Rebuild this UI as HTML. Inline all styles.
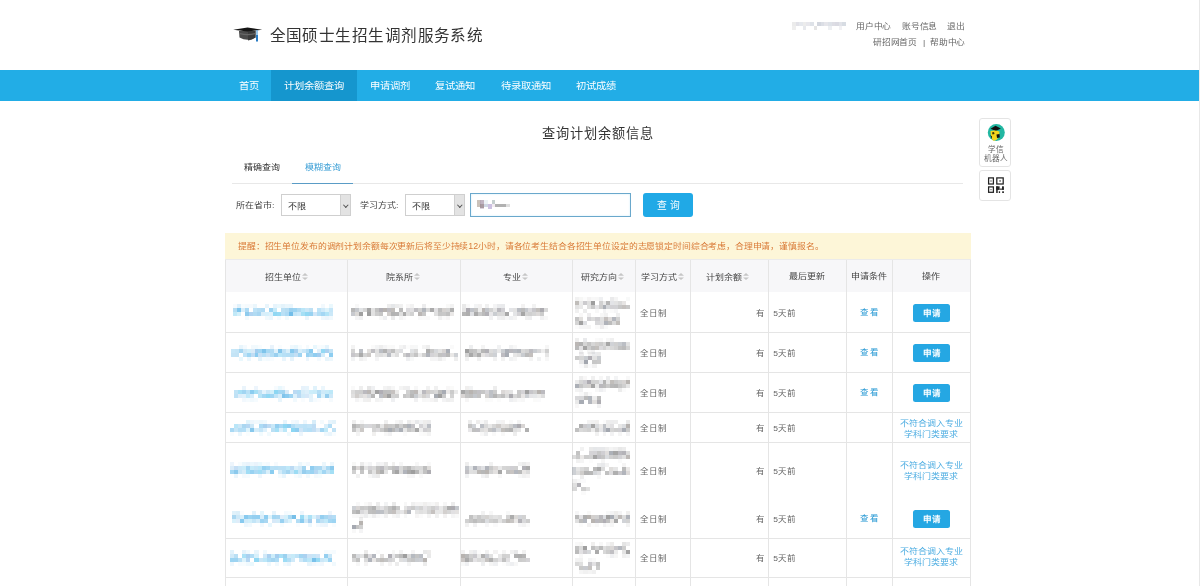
<!DOCTYPE html>
<html lang="zh-CN">
<head>
<meta charset="utf-8">
<style>
*{margin:0;padding:0;box-sizing:border-box}
html,body{width:1200px;height:586px;overflow:hidden;background:#fff}
body{position:relative;font-family:"Liberation Sans",sans-serif;color:#333}
.abs{position:absolute;white-space:nowrap}
#sb{position:absolute;left:1199px;top:0;width:1px;height:586px;background:#e8e8e8}
#nav{position:absolute;left:0;top:70px;width:1199px;height:31px;background:#22ade6}
#nav .on{position:absolute;left:270.5px;top:0;width:86.3px;height:31px;background:#1596ce}
#nav .t{position:absolute;top:11.6px;font-size:10.3px;line-height:10.3px;color:#fff;white-space:nowrap;transform:scaleY(0.9);transform-origin:0 0}
.toplnk{font-size:9px;line-height:9px;color:#666;transform:scale(0.975,0.86);transform-origin:0 0}
.f9{font-size:9px;line-height:9px;transform:scaleY(0.86);transform-origin:0 0}
.sel{position:absolute;height:22px;border:1px solid #cfcfcf;background:#fff}
.sel .arr{position:absolute;right:0;top:0;width:10.5px;height:20px;background:#e3e3e3;border-left:1px solid #d0d0d0}
.sel .arr:after{content:"";position:absolute;left:3.2px;top:7.6px;width:2.6px;height:2.6px;border-right:1px solid #555;border-bottom:1px solid #555;transform:rotate(45deg)}
.sel .txt{position:absolute;left:6px;top:7.5px;font-size:9px;line-height:9px;color:#333;transform:scaleY(0.86);transform-origin:0 0}
.hl{position:absolute;height:1px;background:#e5e5e5}
.vl{position:absolute;width:1px;background:#e5e5e5}
.th{position:absolute;top:273px;font-size:9px;line-height:9px;color:#444;white-space:nowrap;transform:scaleY(0.88);transform-origin:0 0}
.si{display:inline-block;width:7px;height:8px;vertical-align:-0.5px;margin-left:1.2px;position:relative}
.si:before,.si:after{content:"";position:absolute;left:0;border-left:3.5px solid transparent;border-right:3.5px solid transparent}
.si:before{top:-0.5px;border-bottom:3.2px solid #c6c6c6}
.si:after{top:4.5px;border-top:3px solid #c6c6c6}
.td{position:absolute;font-size:8.5px;line-height:8.5px;letter-spacing:0;color:#666;white-space:nowrap;transform:scaleY(0.9);transform-origin:0 0}
.link{color:#2799d4;font-weight:500;letter-spacing:0.2px}
.btn{position:absolute;width:37px;height:17.5px;line-height:18.6px;border-radius:2.5px;background:#25a7e3;color:#fff;text-align:center;font-size:9px;font-weight:bold}
.bt{display:inline-block;transform:scale(0.95,0.86);transform-origin:50% 50%}
.cond{position:absolute;color:#4dade2;font-size:9px;line-height:11.6px;text-align:center;width:78px;white-space:nowrap;transform:scaleY(0.88);transform-origin:0 0}
</style>
</head>
<body>
<div id="wrap" style="position:absolute;left:0;top:0;width:1200px;height:586px;will-change:transform">
<div id="sb"></div>

<!-- header -->
<svg class="abs" style="left:230px;top:25px" width="35" height="20" viewBox="230 25 35 20">
  <path d="M239,31 L255.5,31 L255.5,37.6 Q247.5,42 239.5,37.6 Z" fill="#4a4a4a"/>
  <path d="M248,31.5 L255.5,31 L255.5,37.6 Q252,40 248,40.5 Z" fill="#3a3a3a"/>
  <path d="M240,33 Q247.5,35 255,33 L255,34.2 Q247.5,36.5 240,34.2 Z" fill="#666"/>
  <polygon points="233.2,29.7 247.5,27.4 262.2,29.7 247.5,31.6" fill="#151515"/>
  <rect x="256" y="30.5" width="2" height="11" fill="#2a7cc4"/>
  <rect x="256" y="30.5" width="2" height="4.5" fill="#9cc8ea"/>
</svg>
<div class="abs" style="left:269.5px;top:28.2px;font-size:15.6px;line-height:15.6px;letter-spacing:0.45px;color:#333">全国硕士生招生调剂服务系统</div>

<div class="abs toplnk" style="left:856px;top:22.8px">用户中心</div>
<div class="abs toplnk" style="left:901.5px;top:22.8px">账号信息</div>
<div class="abs toplnk" style="left:946.5px;top:22.8px">退出</div>
<div class="abs toplnk" style="left:873px;top:39.3px">研招网首页</div>
<div class="abs toplnk" style="left:923px;top:39.3px">|</div>
<div class="abs toplnk" style="left:930px;top:39.3px">帮助中心</div>

<div id="nav">
  <div class="on"></div>
  <div class="t" style="left:239px">首页</div>
  <div class="t" style="left:284px">计划余额查询</div>
  <div class="t" style="left:370px">申请调剂</div>
  <div class="t" style="left:435px">复试通知</div>
  <div class="t" style="left:501px">待录取通知</div>
  <div class="t" style="left:576.3px">初试成绩</div>
</div>

<!-- page title -->
<div class="abs" style="left:542px;top:126.5px;font-size:13.2px;line-height:13.2px;letter-spacing:0.95px;color:#333">查询计划余额信息</div>

<!-- tabs -->
<div class="abs f9" style="left:244.4px;top:164px;color:#333">精确查询</div>
<div class="abs f9" style="left:305px;top:164px;color:#3b9fd6">模糊查询</div>
<div class="abs" style="left:232px;top:183px;width:731px;height:1px;background:#e8e8e8"></div>
<div class="abs" style="left:292px;top:183px;width:61px;height:1px;background:#5a9cc6"></div>

<!-- robot widget -->
<div class="abs" style="left:979px;top:118px;width:32px;height:48.5px;border:1px solid #e4e4e4;border-radius:3px;background:#fff"></div>
<svg class="abs" style="left:985px;top:121px" width="23" height="23" viewBox="985 121 23 23">
  <circle cx="996.3" cy="132.4" r="8.5" fill="#22b7a2"/>
  <path d="M990.5,128.8 L995.5,125.8 L1000.8,128.6 L995.8,131 Z" fill="#111"/>
  <path d="M990.5,131 Q995,129.8 999.5,131.5 L999,137 Q996,141.5 993,140.5 Q990.5,137 990.5,131 Z" fill="#f4d51e"/>
  <path d="M992,132.5 L994,132 L994.5,134 L992.5,134.5 Z" fill="#3a3000"/>
  <path d="M996.5,134.5 L999.5,134 L999.8,137.5 L997,138 Z" fill="#111"/>
  <path d="M990.2,135 L992,136.5 L991.8,139 Z" fill="#111"/>
</svg>
<div class="abs" style="left:988px;top:146.2px;font-size:7.6px;line-height:7.6px;color:#666">学信</div>
<div class="abs" style="left:984px;top:155.2px;font-size:7.6px;line-height:7.6px;color:#666">机器人</div>
<div class="abs" style="left:979px;top:169.5px;width:32px;height:31px;border:1px solid #e4e4e4;border-radius:3px;background:#fff"></div>
<svg class="abs" style="left:985px;top:175px" width="21" height="20" viewBox="985 175 21 20">
  <g fill="none" stroke="#222" stroke-width="1.25">
    <rect x="988.6" y="177.9" width="4.8" height="6.1"/>
    <rect x="996.8" y="177.9" width="6.4" height="6.1"/>
    <rect x="988.6" y="186.9" width="4.8" height="5.4"/>
  </g>
  <g fill="#222">
    <rect x="990.5" y="180.4" width="1" height="1.2"/>
    <rect x="999.5" y="180.2" width="1.1" height="1.5"/>
    <rect x="990.5" y="189.2" width="1" height="1"/>
    <rect x="996.2" y="186.3" width="3.4" height="3.6"/>
    <rect x="996.2" y="186.3" width="1.5" height="6.7"/>
    <rect x="1002" y="186.3" width="1.9" height="3.4"/>
    <rect x="999.6" y="188.6" width="4.3" height="1.1"/>
    <rect x="998.8" y="191.3" width="1.3" height="1.7"/>
    <rect x="1002.2" y="191.3" width="1.7" height="1.7"/>
  </g>
</svg>

<!-- search form -->
<div class="abs f9" style="left:236px;top:201.7px;color:#444">所在省市:</div>
<div class="sel" style="left:281px;top:194px;width:70px"><span class="txt">不限</span><span class="arr"></span></div>
<div class="abs f9" style="left:360px;top:201.7px;color:#444">学习方式:</div>
<div class="sel" style="left:405px;top:194px;width:60px"><span class="txt">不限</span><span class="arr"></span></div>
<div class="abs" style="left:470px;top:193px;width:161px;height:24px;border:1px solid #6aa8cc;background:#fff;box-shadow:inset 0 0 2px rgba(102,200,240,0.35)"></div>
<svg class="abs" style="left:476px;top:199px;opacity:0.75" width="40" height="12" viewBox="476 199 40 12" shape-rendering="crispEdges">
  <rect x="477" y="200" width="3.5" height="7" fill="#a89a8c" fill-opacity="0.8"/>
  <rect x="480" y="200" width="4" height="4" fill="#9c8aa0" fill-opacity="0.85"/>
  <rect x="480" y="204" width="4" height="4" fill="#7e6a74" fill-opacity="0.9"/>
  <rect x="480" y="208" width="4" height="1" fill="#b0a0b8" fill-opacity="0.6"/>
  <rect x="484" y="200" width="4" height="4" fill="#dfe8f0" fill-opacity="0.8"/>
  <rect x="484" y="204" width="4" height="3" fill="#b8c4d8" fill-opacity="0.9"/>
  <rect x="488" y="204" width="4" height="5" fill="#b4a4d4" fill-opacity="0.9"/>
  <rect x="492" y="200" width="3" height="4" fill="#a4b4b4" fill-opacity="0.85"/>
  <rect x="492" y="204" width="3" height="3" fill="#e8dde8" fill-opacity="0.8"/>
  <rect x="495" y="204" width="11" height="3" fill="#8c8c8c" fill-opacity="0.9"/>
  <rect x="506" y="204" width="4" height="3" fill="#c8c8c8" fill-opacity="0.8"/>
</svg>
<div class="abs" style="left:643px;top:193px;width:50px;height:24px;border-radius:3px;background:#20a9e6"></div>
<div class="abs" style="left:657px;top:200.5px;font-size:9.8px;line-height:9.8px;color:#fff;letter-spacing:3.2px">查询</div>

<!-- notice -->
<div class="abs" style="left:225px;top:233px;width:746px;height:26px;background:#fdf6d8"></div>
<div class="abs" style="left:238.3px;top:242.6px;font-size:9px;line-height:9px;color:#d97936;transform:scale(0.984,0.92);transform-origin:0 0">提醒：招生单位发布的调剂计划余额每次更新后将至少持续12小时，请各位考生结合各招生单位设定的志愿锁定时间综合考虑，合理申请，谨慎报名。</div>

<!-- table grid -->
<div class="abs" style="left:225px;top:259px;width:746px;height:33px;background:#f7f7f9"></div>
<div class="vl" style="left:225px;top:259px;height:327px"></div>
<div class="vl" style="left:347px;top:259px;height:327px"></div>
<div class="vl" style="left:460px;top:259px;height:327px"></div>
<div class="vl" style="left:572px;top:259px;height:327px"></div>
<div class="vl" style="left:635px;top:259px;height:327px"></div>
<div class="vl" style="left:690px;top:259px;height:327px"></div>
<div class="vl" style="left:768px;top:259px;height:327px"></div>
<div class="vl" style="left:846px;top:259px;height:327px"></div>
<div class="vl" style="left:892px;top:259px;height:327px"></div>
<div class="vl" style="left:970px;top:259px;height:327px"></div>
<div class="hl" style="left:225px;top:259px;width:746px;background:#ebebeb"></div>
<div class="hl" style="left:225px;top:332px;width:746px"></div>
<div class="hl" style="left:225px;top:372px;width:746px"></div>
<div class="hl" style="left:225px;top:412px;width:746px"></div>
<div class="hl" style="left:225px;top:442px;width:746px"></div>
<div class="hl" style="left:225px;top:538px;width:746px"></div>
<div class="hl" style="left:225px;top:577px;width:746px"></div>

<!-- header cells -->
<div class="th" style="left:264.6px">招生单位<i class="si"></i></div>
<div class="th" style="left:385.8px">院系所<i class="si"></i></div>
<div class="th" style="left:503px">专业<i class="si"></i></div>
<div class="th" style="left:581px">研究方向<i class="si"></i></div>
<div class="th" style="left:641px">学习方式<i class="si"></i></div>
<div class="th" style="left:706px">计划余额<i class="si"></i></div>
<div class="th" style="left:789px">最后更新</div>
<div class="th" style="left:851px">申请条件</div>
<div class="th" style="left:922px">操作</div>

<!-- body cells -->
<div class="td" style="left:640px;top:309.5px">全日制</div>
<div class="td" style="left:755.5px;top:309.5px">有</div>
<div class="td" style="left:773.3px;top:309.5px">5天前</div>
<div class="td link" style="left:860.4px;top:308.5px">查看</div>
<div class="btn" style="left:913px;top:304.2px"><span class="bt">申请</span></div>

<div class="td" style="left:640px;top:349.5px">全日制</div>
<div class="td" style="left:755.5px;top:349.5px">有</div>
<div class="td" style="left:773.3px;top:349.5px">5天前</div>
<div class="td link" style="left:860.4px;top:348.5px">查看</div>
<div class="btn" style="left:913px;top:344.2px"><span class="bt">申请</span></div>

<div class="td" style="left:640px;top:389.5px">全日制</div>
<div class="td" style="left:755.5px;top:389.5px">有</div>
<div class="td" style="left:773.3px;top:389.5px">5天前</div>
<div class="td link" style="left:860.4px;top:388.5px">查看</div>
<div class="btn" style="left:913px;top:384.2px"><span class="bt">申请</span></div>

<div class="td" style="left:640px;top:424.5px">全日制</div>
<div class="td" style="left:755.5px;top:424.5px">有</div>
<div class="td" style="left:773.3px;top:424.5px">5天前</div>
<div class="cond" style="left:892px;top:418.5px">不符合调入专业<br>学科门类要求</div>

<div class="td" style="left:640px;top:467.5px">全日制</div>
<div class="td" style="left:755.5px;top:467.5px">有</div>
<div class="td" style="left:773.3px;top:467.5px">5天前</div>
<div class="cond" style="left:892px;top:460.5px">不符合调入专业<br>学科门类要求</div>

<div class="td" style="left:640px;top:515.5px">全日制</div>
<div class="td" style="left:755.5px;top:515.5px">有</div>
<div class="td" style="left:773.3px;top:515.5px">5天前</div>
<div class="td link" style="left:860.4px;top:514.5px">查看</div>
<div class="btn" style="left:913px;top:510px"><span class="bt">申请</span></div>

<div class="td" style="left:640px;top:555px">全日制</div>
<div class="td" style="left:755.5px;top:555px">有</div>
<div class="td" style="left:773.3px;top:555px">5天前</div>
<div class="cond" style="left:892px;top:547px">不符合调入专业<br>学科门类要求</div>

<svg class="abs" style="left:233px;top:304px" width="100" height="16" shape-rendering="crispEdges"><rect x="0.00" y="0" width="4.00" height="4" fill="#7fb9e8" fill-opacity="0.06"/><rect x="4.00" y="0" width="4.00" height="4" fill="#4aaee6" fill-opacity="0.17"/><rect x="8.00" y="0" width="4.00" height="4" fill="#5fc6ee" fill-opacity="0.05"/><rect x="12.00" y="0" width="4.00" height="4" fill="#3da5e0" fill-opacity="0.05"/><rect x="16.00" y="0" width="4.00" height="4" fill="#3da5e0" fill-opacity="0.05"/><rect x="20.00" y="0" width="4.00" height="4" fill="#5cb8ea" fill-opacity="0.13"/><rect x="32.00" y="0" width="4.00" height="4" fill="#4aaee6" fill-opacity="0.13"/><rect x="40.00" y="0" width="4.00" height="4" fill="#78c4ee" fill-opacity="0.18"/><rect x="44.00" y="0" width="4.00" height="4" fill="#5fc6ee" fill-opacity="0.13"/><rect x="48.00" y="0" width="4.00" height="4" fill="#5cb8ea" fill-opacity="0.17"/><rect x="52.00" y="0" width="4.00" height="4" fill="#5cb8ea" fill-opacity="0.13"/><rect x="56.00" y="0" width="4.00" height="4" fill="#4aaee6" fill-opacity="0.13"/><rect x="88.00" y="0" width="4.00" height="4" fill="#5cb8ea" fill-opacity="0.08"/><rect x="96.00" y="0" width="4.00" height="4" fill="#5fc6ee" fill-opacity="0.13"/><rect x="0.00" y="4" width="4.00" height="4" fill="#3da5e0" fill-opacity="0.38"/><rect x="4.00" y="4" width="4.00" height="4" fill="#4aaee6" fill-opacity="0.71"/><rect x="8.00" y="4" width="4.00" height="4" fill="#78c4ee" fill-opacity="0.29"/><rect x="12.00" y="4" width="4.00" height="4" fill="#4aaee6" fill-opacity="0.45"/><rect x="20.00" y="4" width="4.00" height="4" fill="#78c4ee" fill-opacity="0.49"/><rect x="24.00" y="4" width="4.00" height="4" fill="#3da5e0" fill-opacity="0.38"/><rect x="28.00" y="4" width="4.00" height="4" fill="#4aaee6" fill-opacity="0.44"/><rect x="36.00" y="4" width="4.00" height="4" fill="#4aaee6" fill-opacity="0.55"/><rect x="40.00" y="4" width="4.00" height="4" fill="#5fc6ee" fill-opacity="0.36"/><rect x="48.00" y="4" width="4.00" height="4" fill="#3da5e0" fill-opacity="0.35"/><rect x="52.00" y="4" width="4.00" height="4" fill="#3da5e0" fill-opacity="0.38"/><rect x="56.00" y="4" width="4.00" height="4" fill="#3da5e0" fill-opacity="0.52"/><rect x="60.00" y="4" width="4.00" height="4" fill="#5cb8ea" fill-opacity="0.60"/><rect x="64.00" y="4" width="4.00" height="4" fill="#3da5e0" fill-opacity="0.41"/><rect x="68.00" y="4" width="4.00" height="4" fill="#5fc6ee" fill-opacity="0.43"/><rect x="72.00" y="4" width="4.00" height="4" fill="#3da5e0" fill-opacity="0.27"/><rect x="76.00" y="4" width="4.00" height="4" fill="#3da5e0" fill-opacity="0.34"/><rect x="84.00" y="4" width="4.00" height="4" fill="#5cb8ea" fill-opacity="0.40"/><rect x="88.00" y="4" width="4.00" height="4" fill="#5cb8ea" fill-opacity="0.29"/><rect x="92.00" y="4" width="4.00" height="4" fill="#5fc6ee" fill-opacity="0.21"/><rect x="96.00" y="4" width="4.00" height="4" fill="#5cb8ea" fill-opacity="0.35"/><rect x="0.00" y="8" width="4.00" height="4" fill="#5fc6ee" fill-opacity="0.39"/><rect x="4.00" y="8" width="4.00" height="4" fill="#5fc6ee" fill-opacity="0.27"/><rect x="12.00" y="8" width="4.00" height="4" fill="#3da5e0" fill-opacity="0.58"/><rect x="16.00" y="8" width="4.00" height="4" fill="#7fb9e8" fill-opacity="0.61"/><rect x="20.00" y="8" width="4.00" height="4" fill="#3da5e0" fill-opacity="0.40"/><rect x="24.00" y="8" width="4.00" height="4" fill="#3da5e0" fill-opacity="0.45"/><rect x="28.00" y="8" width="4.00" height="4" fill="#5cb8ea" fill-opacity="0.24"/><rect x="32.00" y="8" width="4.00" height="4" fill="#5fc6ee" fill-opacity="0.26"/><rect x="36.00" y="8" width="4.00" height="4" fill="#5cb8ea" fill-opacity="0.20"/><rect x="40.00" y="8" width="4.00" height="4" fill="#5fc6ee" fill-opacity="0.69"/><rect x="44.00" y="8" width="4.00" height="4" fill="#5fc6ee" fill-opacity="0.65"/><rect x="48.00" y="8" width="4.00" height="4" fill="#78c4ee" fill-opacity="0.53"/><rect x="52.00" y="8" width="4.00" height="4" fill="#4aaee6" fill-opacity="0.45"/><rect x="56.00" y="8" width="4.00" height="4" fill="#3da5e0" fill-opacity="0.72"/><rect x="60.00" y="8" width="4.00" height="4" fill="#5cb8ea" fill-opacity="0.36"/><rect x="64.00" y="8" width="4.00" height="4" fill="#78c4ee" fill-opacity="0.38"/><rect x="68.00" y="8" width="4.00" height="4" fill="#5fc6ee" fill-opacity="0.56"/><rect x="72.00" y="8" width="4.00" height="4" fill="#5fc6ee" fill-opacity="0.69"/><rect x="76.00" y="8" width="4.00" height="4" fill="#4aaee6" fill-opacity="0.56"/><rect x="80.00" y="8" width="4.00" height="4" fill="#7fb9e8" fill-opacity="0.36"/><rect x="84.00" y="8" width="4.00" height="4" fill="#78c4ee" fill-opacity="0.56"/><rect x="88.00" y="8" width="4.00" height="4" fill="#78c4ee" fill-opacity="0.67"/><rect x="92.00" y="8" width="4.00" height="4" fill="#5fc6ee" fill-opacity="0.48"/><rect x="96.00" y="8" width="4.00" height="4" fill="#5cb8ea" fill-opacity="0.32"/><rect x="12.00" y="12" width="4.00" height="4" fill="#78c4ee" fill-opacity="0.09"/><rect x="32.00" y="12" width="4.00" height="4" fill="#78c4ee" fill-opacity="0.10"/><rect x="36.00" y="12" width="4.00" height="4" fill="#78c4ee" fill-opacity="0.14"/><rect x="44.00" y="12" width="4.00" height="4" fill="#5cb8ea" fill-opacity="0.06"/><rect x="52.00" y="12" width="4.00" height="4" fill="#5fc6ee" fill-opacity="0.09"/><rect x="72.00" y="12" width="4.00" height="4" fill="#3da5e0" fill-opacity="0.11"/><rect x="88.00" y="12" width="4.00" height="4" fill="#78c4ee" fill-opacity="0.12"/><rect x="92.00" y="12" width="4.00" height="4" fill="#7fb9e8" fill-opacity="0.14"/><rect x="96.00" y="12" width="4.00" height="4" fill="#4aaee6" fill-opacity="0.08"/></svg>
<svg class="abs" style="left:351px;top:304px" width="103" height="16" shape-rendering="crispEdges"><rect x="3.96" y="0" width="3.96" height="4" fill="#888" fill-opacity="0.06"/><rect x="35.65" y="0" width="3.96" height="4" fill="#777" fill-opacity="0.13"/><rect x="39.62" y="0" width="3.96" height="4" fill="#7f8590" fill-opacity="0.20"/><rect x="43.58" y="0" width="3.96" height="4" fill="#888" fill-opacity="0.16"/><rect x="47.54" y="0" width="3.96" height="4" fill="#aaa" fill-opacity="0.18"/><rect x="55.46" y="0" width="3.96" height="4" fill="#9a9490" fill-opacity="0.07"/><rect x="59.42" y="0" width="3.96" height="4" fill="#999" fill-opacity="0.13"/><rect x="71.31" y="0" width="3.96" height="4" fill="#8a8890" fill-opacity="0.16"/><rect x="95.08" y="0" width="3.96" height="4" fill="#9a9490" fill-opacity="0.06"/><rect x="99.04" y="0" width="3.96" height="4" fill="#888" fill-opacity="0.11"/><rect x="0.00" y="4" width="3.96" height="4" fill="#888" fill-opacity="0.60"/><rect x="3.96" y="4" width="3.96" height="4" fill="#7f8590" fill-opacity="0.45"/><rect x="7.92" y="4" width="3.96" height="4" fill="#7f8590" fill-opacity="0.23"/><rect x="11.88" y="4" width="3.96" height="4" fill="#aaa" fill-opacity="0.49"/><rect x="15.85" y="4" width="3.96" height="4" fill="#777" fill-opacity="0.66"/><rect x="19.81" y="4" width="3.96" height="4" fill="#aaa" fill-opacity="0.34"/><rect x="23.77" y="4" width="3.96" height="4" fill="#777" fill-opacity="0.44"/><rect x="27.73" y="4" width="3.96" height="4" fill="#8a8890" fill-opacity="0.67"/><rect x="31.69" y="4" width="3.96" height="4" fill="#9a9490" fill-opacity="0.71"/><rect x="35.65" y="4" width="3.96" height="4" fill="#8a8890" fill-opacity="0.56"/><rect x="39.62" y="4" width="3.96" height="4" fill="#9a9490" fill-opacity="0.62"/><rect x="47.54" y="4" width="3.96" height="4" fill="#999" fill-opacity="0.66"/><rect x="55.46" y="4" width="3.96" height="4" fill="#8a8890" fill-opacity="0.31"/><rect x="59.42" y="4" width="3.96" height="4" fill="#8a8890" fill-opacity="0.26"/><rect x="63.38" y="4" width="3.96" height="4" fill="#8a8890" fill-opacity="0.55"/><rect x="67.35" y="4" width="3.96" height="4" fill="#aaa" fill-opacity="0.55"/><rect x="71.31" y="4" width="3.96" height="4" fill="#7f8590" fill-opacity="0.60"/><rect x="75.27" y="4" width="3.96" height="4" fill="#999" fill-opacity="0.39"/><rect x="79.23" y="4" width="3.96" height="4" fill="#888" fill-opacity="0.70"/><rect x="83.19" y="4" width="3.96" height="4" fill="#8a8890" fill-opacity="0.25"/><rect x="87.15" y="4" width="3.96" height="4" fill="#888" fill-opacity="0.55"/><rect x="91.12" y="4" width="3.96" height="4" fill="#9a9490" fill-opacity="0.42"/><rect x="95.08" y="4" width="3.96" height="4" fill="#999" fill-opacity="0.42"/><rect x="99.04" y="4" width="3.96" height="4" fill="#777" fill-opacity="0.58"/><rect x="0.00" y="8" width="3.96" height="4" fill="#7f8590" fill-opacity="0.44"/><rect x="3.96" y="8" width="3.96" height="4" fill="#9a9490" fill-opacity="0.37"/><rect x="7.92" y="8" width="3.96" height="4" fill="#777" fill-opacity="0.70"/><rect x="15.85" y="8" width="3.96" height="4" fill="#777" fill-opacity="0.71"/><rect x="19.81" y="8" width="3.96" height="4" fill="#aaa" fill-opacity="0.34"/><rect x="23.77" y="8" width="3.96" height="4" fill="#aaa" fill-opacity="0.59"/><rect x="27.73" y="8" width="3.96" height="4" fill="#aaa" fill-opacity="0.67"/><rect x="35.65" y="8" width="3.96" height="4" fill="#9a9490" fill-opacity="0.48"/><rect x="39.62" y="8" width="3.96" height="4" fill="#777" fill-opacity="0.56"/><rect x="43.58" y="8" width="3.96" height="4" fill="#888" fill-opacity="0.62"/><rect x="47.54" y="8" width="3.96" height="4" fill="#777" fill-opacity="0.24"/><rect x="51.50" y="8" width="3.96" height="4" fill="#777" fill-opacity="0.62"/><rect x="55.46" y="8" width="3.96" height="4" fill="#999" fill-opacity="0.32"/><rect x="59.42" y="8" width="3.96" height="4" fill="#999" fill-opacity="0.44"/><rect x="67.35" y="8" width="3.96" height="4" fill="#9a9490" fill-opacity="0.68"/><rect x="71.31" y="8" width="3.96" height="4" fill="#888" fill-opacity="0.47"/><rect x="83.19" y="8" width="3.96" height="4" fill="#999" fill-opacity="0.29"/><rect x="87.15" y="8" width="3.96" height="4" fill="#888" fill-opacity="0.48"/><rect x="91.12" y="8" width="3.96" height="4" fill="#888" fill-opacity="0.46"/><rect x="95.08" y="8" width="3.96" height="4" fill="#999" fill-opacity="0.62"/><rect x="99.04" y="8" width="3.96" height="4" fill="#9a9490" fill-opacity="0.21"/><rect x="3.96" y="12" width="3.96" height="4" fill="#8a8890" fill-opacity="0.09"/><rect x="7.92" y="12" width="3.96" height="4" fill="#8a8890" fill-opacity="0.13"/><rect x="27.73" y="12" width="3.96" height="4" fill="#888" fill-opacity="0.06"/><rect x="31.69" y="12" width="3.96" height="4" fill="#7f8590" fill-opacity="0.13"/><rect x="39.62" y="12" width="3.96" height="4" fill="#777" fill-opacity="0.15"/><rect x="47.54" y="12" width="3.96" height="4" fill="#999" fill-opacity="0.11"/><rect x="51.50" y="12" width="3.96" height="4" fill="#7f8590" fill-opacity="0.04"/><rect x="67.35" y="12" width="3.96" height="4" fill="#999" fill-opacity="0.06"/><rect x="71.31" y="12" width="3.96" height="4" fill="#999" fill-opacity="0.05"/><rect x="75.27" y="12" width="3.96" height="4" fill="#999" fill-opacity="0.06"/><rect x="87.15" y="12" width="3.96" height="4" fill="#999" fill-opacity="0.15"/><rect x="91.12" y="12" width="3.96" height="4" fill="#999" fill-opacity="0.05"/><rect x="95.08" y="12" width="3.96" height="4" fill="#9a9490" fill-opacity="0.09"/></svg>
<svg class="abs" style="left:462px;top:304px" width="86" height="16" shape-rendering="crispEdges"><rect x="0.00" y="0" width="3.91" height="4" fill="#777" fill-opacity="0.16"/><rect x="3.91" y="0" width="3.91" height="4" fill="#8a8890" fill-opacity="0.05"/><rect x="11.73" y="0" width="3.91" height="4" fill="#7f8590" fill-opacity="0.09"/><rect x="15.64" y="0" width="3.91" height="4" fill="#9a9490" fill-opacity="0.13"/><rect x="23.45" y="0" width="3.91" height="4" fill="#aaa" fill-opacity="0.18"/><rect x="31.27" y="0" width="3.91" height="4" fill="#8a8890" fill-opacity="0.09"/><rect x="35.18" y="0" width="3.91" height="4" fill="#7f8590" fill-opacity="0.16"/><rect x="39.09" y="0" width="3.91" height="4" fill="#7f8590" fill-opacity="0.17"/><rect x="58.64" y="0" width="3.91" height="4" fill="#9a9490" fill-opacity="0.12"/><rect x="70.36" y="0" width="3.91" height="4" fill="#aaa" fill-opacity="0.15"/><rect x="0.00" y="4" width="3.91" height="4" fill="#888" fill-opacity="0.22"/><rect x="3.91" y="4" width="3.91" height="4" fill="#8a8890" fill-opacity="0.70"/><rect x="7.82" y="4" width="3.91" height="4" fill="#7f8590" fill-opacity="0.49"/><rect x="11.73" y="4" width="3.91" height="4" fill="#888" fill-opacity="0.48"/><rect x="15.64" y="4" width="3.91" height="4" fill="#aaa" fill-opacity="0.20"/><rect x="19.55" y="4" width="3.91" height="4" fill="#9a9490" fill-opacity="0.68"/><rect x="23.45" y="4" width="3.91" height="4" fill="#7f8590" fill-opacity="0.47"/><rect x="27.36" y="4" width="3.91" height="4" fill="#777" fill-opacity="0.33"/><rect x="31.27" y="4" width="3.91" height="4" fill="#aaa" fill-opacity="0.32"/><rect x="35.18" y="4" width="3.91" height="4" fill="#8a8890" fill-opacity="0.58"/><rect x="39.09" y="4" width="3.91" height="4" fill="#8a8890" fill-opacity="0.40"/><rect x="46.91" y="4" width="3.91" height="4" fill="#7f8590" fill-opacity="0.22"/><rect x="50.82" y="4" width="3.91" height="4" fill="#888" fill-opacity="0.24"/><rect x="54.73" y="4" width="3.91" height="4" fill="#7f8590" fill-opacity="0.54"/><rect x="58.64" y="4" width="3.91" height="4" fill="#777" fill-opacity="0.50"/><rect x="62.55" y="4" width="3.91" height="4" fill="#7f8590" fill-opacity="0.45"/><rect x="66.45" y="4" width="3.91" height="4" fill="#8a8890" fill-opacity="0.31"/><rect x="70.36" y="4" width="3.91" height="4" fill="#8a8890" fill-opacity="0.47"/><rect x="74.27" y="4" width="3.91" height="4" fill="#9a9490" fill-opacity="0.60"/><rect x="78.18" y="4" width="3.91" height="4" fill="#8a8890" fill-opacity="0.71"/><rect x="82.09" y="4" width="3.91" height="4" fill="#aaa" fill-opacity="0.44"/><rect x="0.00" y="8" width="3.91" height="4" fill="#999" fill-opacity="0.72"/><rect x="3.91" y="8" width="3.91" height="4" fill="#888" fill-opacity="0.68"/><rect x="7.82" y="8" width="3.91" height="4" fill="#7f8590" fill-opacity="0.25"/><rect x="11.73" y="8" width="3.91" height="4" fill="#888" fill-opacity="0.70"/><rect x="15.64" y="8" width="3.91" height="4" fill="#999" fill-opacity="0.53"/><rect x="19.55" y="8" width="3.91" height="4" fill="#888" fill-opacity="0.57"/><rect x="23.45" y="8" width="3.91" height="4" fill="#8a8890" fill-opacity="0.66"/><rect x="27.36" y="8" width="3.91" height="4" fill="#8a8890" fill-opacity="0.20"/><rect x="31.27" y="8" width="3.91" height="4" fill="#7f8590" fill-opacity="0.41"/><rect x="35.18" y="8" width="3.91" height="4" fill="#999" fill-opacity="0.38"/><rect x="39.09" y="8" width="3.91" height="4" fill="#999" fill-opacity="0.37"/><rect x="43.00" y="8" width="3.91" height="4" fill="#777" fill-opacity="0.64"/><rect x="50.82" y="8" width="3.91" height="4" fill="#7f8590" fill-opacity="0.21"/><rect x="54.73" y="8" width="3.91" height="4" fill="#8a8890" fill-opacity="0.39"/><rect x="58.64" y="8" width="3.91" height="4" fill="#777" fill-opacity="0.65"/><rect x="62.55" y="8" width="3.91" height="4" fill="#999" fill-opacity="0.42"/><rect x="66.45" y="8" width="3.91" height="4" fill="#777" fill-opacity="0.35"/><rect x="70.36" y="8" width="3.91" height="4" fill="#888" fill-opacity="0.35"/><rect x="74.27" y="8" width="3.91" height="4" fill="#9a9490" fill-opacity="0.34"/><rect x="78.18" y="8" width="3.91" height="4" fill="#aaa" fill-opacity="0.60"/><rect x="27.36" y="12" width="3.91" height="4" fill="#8a8890" fill-opacity="0.12"/><rect x="35.18" y="12" width="3.91" height="4" fill="#8a8890" fill-opacity="0.13"/><rect x="39.09" y="12" width="3.91" height="4" fill="#888" fill-opacity="0.14"/><rect x="43.00" y="12" width="3.91" height="4" fill="#999" fill-opacity="0.08"/><rect x="46.91" y="12" width="3.91" height="4" fill="#7f8590" fill-opacity="0.12"/><rect x="50.82" y="12" width="3.91" height="4" fill="#999" fill-opacity="0.11"/><rect x="62.55" y="12" width="3.91" height="4" fill="#777" fill-opacity="0.11"/><rect x="66.45" y="12" width="3.91" height="4" fill="#8a8890" fill-opacity="0.14"/><rect x="78.18" y="12" width="3.91" height="4" fill="#8a8890" fill-opacity="0.12"/><rect x="82.09" y="12" width="3.91" height="4" fill="#777" fill-opacity="0.05"/></svg>
<svg class="abs" style="left:575px;top:297px" width="55" height="16" shape-rendering="crispEdges"><rect x="0.00" y="0" width="3.93" height="4" fill="#999" fill-opacity="0.13"/><rect x="3.93" y="0" width="3.93" height="4" fill="#9a9490" fill-opacity="0.08"/><rect x="7.86" y="0" width="3.93" height="4" fill="#aaa" fill-opacity="0.04"/><rect x="11.79" y="0" width="3.93" height="4" fill="#9a9490" fill-opacity="0.11"/><rect x="15.71" y="0" width="3.93" height="4" fill="#aaa" fill-opacity="0.08"/><rect x="19.64" y="0" width="3.93" height="4" fill="#999" fill-opacity="0.08"/><rect x="23.57" y="0" width="3.93" height="4" fill="#7f8590" fill-opacity="0.12"/><rect x="35.36" y="0" width="3.93" height="4" fill="#8a8890" fill-opacity="0.18"/><rect x="39.29" y="0" width="3.93" height="4" fill="#999" fill-opacity="0.11"/><rect x="51.07" y="0" width="3.93" height="4" fill="#7f8590" fill-opacity="0.05"/><rect x="0.00" y="4" width="3.93" height="4" fill="#9a9490" fill-opacity="0.62"/><rect x="3.93" y="4" width="3.93" height="4" fill="#aaa" fill-opacity="0.24"/><rect x="7.86" y="4" width="3.93" height="4" fill="#8a8890" fill-opacity="0.44"/><rect x="11.79" y="4" width="3.93" height="4" fill="#888" fill-opacity="0.26"/><rect x="15.71" y="4" width="3.93" height="4" fill="#777" fill-opacity="0.71"/><rect x="23.57" y="4" width="3.93" height="4" fill="#aaa" fill-opacity="0.54"/><rect x="27.50" y="4" width="3.93" height="4" fill="#aaa" fill-opacity="0.24"/><rect x="31.43" y="4" width="3.93" height="4" fill="#888" fill-opacity="0.61"/><rect x="35.36" y="4" width="3.93" height="4" fill="#7f8590" fill-opacity="0.22"/><rect x="39.29" y="4" width="3.93" height="4" fill="#999" fill-opacity="0.27"/><rect x="43.21" y="4" width="3.93" height="4" fill="#aaa" fill-opacity="0.43"/><rect x="47.14" y="4" width="3.93" height="4" fill="#9a9490" fill-opacity="0.24"/><rect x="0.00" y="8" width="3.93" height="4" fill="#aaa" fill-opacity="0.34"/><rect x="3.93" y="8" width="3.93" height="4" fill="#999" fill-opacity="0.21"/><rect x="11.79" y="8" width="3.93" height="4" fill="#aaa" fill-opacity="0.36"/><rect x="15.71" y="8" width="3.93" height="4" fill="#888" fill-opacity="0.45"/><rect x="19.64" y="8" width="3.93" height="4" fill="#8a8890" fill-opacity="0.22"/><rect x="23.57" y="8" width="3.93" height="4" fill="#777" fill-opacity="0.36"/><rect x="27.50" y="8" width="3.93" height="4" fill="#7f8590" fill-opacity="0.66"/><rect x="31.43" y="8" width="3.93" height="4" fill="#7f8590" fill-opacity="0.33"/><rect x="35.36" y="8" width="3.93" height="4" fill="#8a8890" fill-opacity="0.39"/><rect x="39.29" y="8" width="3.93" height="4" fill="#8a8890" fill-opacity="0.38"/><rect x="43.21" y="8" width="3.93" height="4" fill="#777" fill-opacity="0.41"/><rect x="47.14" y="8" width="3.93" height="4" fill="#9a9490" fill-opacity="0.58"/><rect x="51.07" y="8" width="3.93" height="4" fill="#888" fill-opacity="0.46"/><rect x="0.00" y="12" width="3.93" height="4" fill="#888" fill-opacity="0.13"/><rect x="7.86" y="12" width="3.93" height="4" fill="#777" fill-opacity="0.14"/><rect x="19.64" y="12" width="3.93" height="4" fill="#8a8890" fill-opacity="0.06"/><rect x="27.50" y="12" width="3.93" height="4" fill="#8a8890" fill-opacity="0.10"/><rect x="31.43" y="12" width="3.93" height="4" fill="#9a9490" fill-opacity="0.03"/><rect x="35.36" y="12" width="3.93" height="4" fill="#777" fill-opacity="0.04"/><rect x="39.29" y="12" width="3.93" height="4" fill="#7f8590" fill-opacity="0.08"/></svg>
<svg class="abs" style="left:575px;top:313px" width="45" height="16" shape-rendering="crispEdges"><rect x="4.09" y="0" width="4.09" height="4" fill="#9a9490" fill-opacity="0.07"/><rect x="12.27" y="0" width="4.09" height="4" fill="#8a8890" fill-opacity="0.15"/><rect x="24.55" y="0" width="4.09" height="4" fill="#777" fill-opacity="0.06"/><rect x="28.64" y="0" width="4.09" height="4" fill="#777" fill-opacity="0.10"/><rect x="40.91" y="0" width="4.09" height="4" fill="#999" fill-opacity="0.16"/><rect x="0.00" y="4" width="4.09" height="4" fill="#777" fill-opacity="0.42"/><rect x="4.09" y="4" width="4.09" height="4" fill="#9a9490" fill-opacity="0.30"/><rect x="12.27" y="4" width="4.09" height="4" fill="#8a8890" fill-opacity="0.39"/><rect x="16.36" y="4" width="4.09" height="4" fill="#aaa" fill-opacity="0.41"/><rect x="20.45" y="4" width="4.09" height="4" fill="#8a8890" fill-opacity="0.41"/><rect x="24.55" y="4" width="4.09" height="4" fill="#777" fill-opacity="0.23"/><rect x="28.64" y="4" width="4.09" height="4" fill="#9a9490" fill-opacity="0.59"/><rect x="32.73" y="4" width="4.09" height="4" fill="#9a9490" fill-opacity="0.34"/><rect x="36.82" y="4" width="4.09" height="4" fill="#7f8590" fill-opacity="0.59"/><rect x="40.91" y="4" width="4.09" height="4" fill="#777" fill-opacity="0.34"/><rect x="0.00" y="8" width="4.09" height="4" fill="#aaa" fill-opacity="0.51"/><rect x="4.09" y="8" width="4.09" height="4" fill="#777" fill-opacity="0.69"/><rect x="8.18" y="8" width="4.09" height="4" fill="#7f8590" fill-opacity="0.26"/><rect x="20.45" y="8" width="4.09" height="4" fill="#8a8890" fill-opacity="0.33"/><rect x="24.55" y="8" width="4.09" height="4" fill="#8a8890" fill-opacity="0.27"/><rect x="28.64" y="8" width="4.09" height="4" fill="#7f8590" fill-opacity="0.62"/><rect x="32.73" y="8" width="4.09" height="4" fill="#888" fill-opacity="0.56"/><rect x="36.82" y="8" width="4.09" height="4" fill="#999" fill-opacity="0.37"/><rect x="40.91" y="8" width="4.09" height="4" fill="#9a9490" fill-opacity="0.61"/><rect x="0.00" y="12" width="4.09" height="4" fill="#aaa" fill-opacity="0.05"/><rect x="4.09" y="12" width="4.09" height="4" fill="#7f8590" fill-opacity="0.08"/><rect x="8.18" y="12" width="4.09" height="4" fill="#999" fill-opacity="0.10"/><rect x="12.27" y="12" width="4.09" height="4" fill="#777" fill-opacity="0.08"/><rect x="20.45" y="12" width="4.09" height="4" fill="#777" fill-opacity="0.04"/><rect x="24.55" y="12" width="4.09" height="4" fill="#8a8890" fill-opacity="0.15"/><rect x="28.64" y="12" width="4.09" height="4" fill="#8a8890" fill-opacity="0.05"/></svg>
<svg class="abs" style="left:231px;top:345px" width="102" height="16" shape-rendering="crispEdges"><rect x="7.85" y="0" width="3.92" height="4" fill="#78c4ee" fill-opacity="0.17"/><rect x="11.77" y="0" width="3.92" height="4" fill="#78c4ee" fill-opacity="0.08"/><rect x="19.62" y="0" width="3.92" height="4" fill="#5cb8ea" fill-opacity="0.08"/><rect x="23.54" y="0" width="3.92" height="4" fill="#5fc6ee" fill-opacity="0.09"/><rect x="27.46" y="0" width="3.92" height="4" fill="#78c4ee" fill-opacity="0.05"/><rect x="39.23" y="0" width="3.92" height="4" fill="#7fb9e8" fill-opacity="0.17"/><rect x="47.08" y="0" width="3.92" height="4" fill="#5cb8ea" fill-opacity="0.04"/><rect x="58.85" y="0" width="3.92" height="4" fill="#4aaee6" fill-opacity="0.09"/><rect x="62.77" y="0" width="3.92" height="4" fill="#5fc6ee" fill-opacity="0.14"/><rect x="66.69" y="0" width="3.92" height="4" fill="#5fc6ee" fill-opacity="0.05"/><rect x="74.54" y="0" width="3.92" height="4" fill="#7fb9e8" fill-opacity="0.08"/><rect x="82.38" y="0" width="3.92" height="4" fill="#5fc6ee" fill-opacity="0.14"/><rect x="86.31" y="0" width="3.92" height="4" fill="#78c4ee" fill-opacity="0.05"/><rect x="90.23" y="0" width="3.92" height="4" fill="#78c4ee" fill-opacity="0.07"/><rect x="94.15" y="0" width="3.92" height="4" fill="#5cb8ea" fill-opacity="0.16"/><rect x="0.00" y="4" width="3.92" height="4" fill="#78c4ee" fill-opacity="0.41"/><rect x="3.92" y="4" width="3.92" height="4" fill="#5cb8ea" fill-opacity="0.36"/><rect x="7.85" y="4" width="3.92" height="4" fill="#3da5e0" fill-opacity="0.46"/><rect x="11.77" y="4" width="3.92" height="4" fill="#3da5e0" fill-opacity="0.25"/><rect x="15.69" y="4" width="3.92" height="4" fill="#5fc6ee" fill-opacity="0.28"/><rect x="19.62" y="4" width="3.92" height="4" fill="#7fb9e8" fill-opacity="0.29"/><rect x="23.54" y="4" width="3.92" height="4" fill="#7fb9e8" fill-opacity="0.71"/><rect x="27.46" y="4" width="3.92" height="4" fill="#78c4ee" fill-opacity="0.70"/><rect x="31.38" y="4" width="3.92" height="4" fill="#3da5e0" fill-opacity="0.66"/><rect x="35.31" y="4" width="3.92" height="4" fill="#78c4ee" fill-opacity="0.65"/><rect x="39.23" y="4" width="3.92" height="4" fill="#3da5e0" fill-opacity="0.40"/><rect x="43.15" y="4" width="3.92" height="4" fill="#5cb8ea" fill-opacity="0.20"/><rect x="47.08" y="4" width="3.92" height="4" fill="#3da5e0" fill-opacity="0.63"/><rect x="51.00" y="4" width="3.92" height="4" fill="#5cb8ea" fill-opacity="0.39"/><rect x="54.92" y="4" width="3.92" height="4" fill="#5cb8ea" fill-opacity="0.23"/><rect x="58.85" y="4" width="3.92" height="4" fill="#4aaee6" fill-opacity="0.67"/><rect x="62.77" y="4" width="3.92" height="4" fill="#7fb9e8" fill-opacity="0.68"/><rect x="66.69" y="4" width="3.92" height="4" fill="#78c4ee" fill-opacity="0.28"/><rect x="70.62" y="4" width="3.92" height="4" fill="#4aaee6" fill-opacity="0.29"/><rect x="74.54" y="4" width="3.92" height="4" fill="#5cb8ea" fill-opacity="0.46"/><rect x="78.46" y="4" width="3.92" height="4" fill="#4aaee6" fill-opacity="0.64"/><rect x="86.31" y="4" width="3.92" height="4" fill="#7fb9e8" fill-opacity="0.23"/><rect x="90.23" y="4" width="3.92" height="4" fill="#5fc6ee" fill-opacity="0.67"/><rect x="94.15" y="4" width="3.92" height="4" fill="#7fb9e8" fill-opacity="0.66"/><rect x="98.08" y="4" width="3.92" height="4" fill="#3da5e0" fill-opacity="0.32"/><rect x="0.00" y="8" width="3.92" height="4" fill="#3da5e0" fill-opacity="0.30"/><rect x="3.92" y="8" width="3.92" height="4" fill="#3da5e0" fill-opacity="0.31"/><rect x="11.77" y="8" width="3.92" height="4" fill="#5cb8ea" fill-opacity="0.39"/><rect x="15.69" y="8" width="3.92" height="4" fill="#5cb8ea" fill-opacity="0.58"/><rect x="19.62" y="8" width="3.92" height="4" fill="#7fb9e8" fill-opacity="0.49"/><rect x="23.54" y="8" width="3.92" height="4" fill="#4aaee6" fill-opacity="0.64"/><rect x="27.46" y="8" width="3.92" height="4" fill="#7fb9e8" fill-opacity="0.44"/><rect x="31.38" y="8" width="3.92" height="4" fill="#78c4ee" fill-opacity="0.54"/><rect x="35.31" y="8" width="3.92" height="4" fill="#7fb9e8" fill-opacity="0.42"/><rect x="39.23" y="8" width="3.92" height="4" fill="#5cb8ea" fill-opacity="0.46"/><rect x="43.15" y="8" width="3.92" height="4" fill="#3da5e0" fill-opacity="0.52"/><rect x="47.08" y="8" width="3.92" height="4" fill="#5fc6ee" fill-opacity="0.43"/><rect x="51.00" y="8" width="3.92" height="4" fill="#5cb8ea" fill-opacity="0.44"/><rect x="54.92" y="8" width="3.92" height="4" fill="#4aaee6" fill-opacity="0.41"/><rect x="58.85" y="8" width="3.92" height="4" fill="#4aaee6" fill-opacity="0.42"/><rect x="62.77" y="8" width="3.92" height="4" fill="#7fb9e8" fill-opacity="0.46"/><rect x="66.69" y="8" width="3.92" height="4" fill="#4aaee6" fill-opacity="0.53"/><rect x="74.54" y="8" width="3.92" height="4" fill="#4aaee6" fill-opacity="0.57"/><rect x="78.46" y="8" width="3.92" height="4" fill="#3da5e0" fill-opacity="0.46"/><rect x="82.38" y="8" width="3.92" height="4" fill="#4aaee6" fill-opacity="0.61"/><rect x="86.31" y="8" width="3.92" height="4" fill="#7fb9e8" fill-opacity="0.72"/><rect x="90.23" y="8" width="3.92" height="4" fill="#5cb8ea" fill-opacity="0.26"/><rect x="98.08" y="8" width="3.92" height="4" fill="#5cb8ea" fill-opacity="0.70"/><rect x="7.85" y="12" width="3.92" height="4" fill="#5fc6ee" fill-opacity="0.13"/><rect x="15.69" y="12" width="3.92" height="4" fill="#78c4ee" fill-opacity="0.14"/><rect x="27.46" y="12" width="3.92" height="4" fill="#3da5e0" fill-opacity="0.15"/><rect x="31.38" y="12" width="3.92" height="4" fill="#5fc6ee" fill-opacity="0.06"/><rect x="35.31" y="12" width="3.92" height="4" fill="#5cb8ea" fill-opacity="0.07"/><rect x="39.23" y="12" width="3.92" height="4" fill="#78c4ee" fill-opacity="0.05"/><rect x="51.00" y="12" width="3.92" height="4" fill="#4aaee6" fill-opacity="0.12"/><rect x="58.85" y="12" width="3.92" height="4" fill="#3da5e0" fill-opacity="0.13"/><rect x="74.54" y="12" width="3.92" height="4" fill="#7fb9e8" fill-opacity="0.15"/><rect x="86.31" y="12" width="3.92" height="4" fill="#78c4ee" fill-opacity="0.08"/><rect x="94.15" y="12" width="3.92" height="4" fill="#3da5e0" fill-opacity="0.12"/><rect x="98.08" y="12" width="3.92" height="4" fill="#4aaee6" fill-opacity="0.10"/></svg>
<svg class="abs" style="left:351px;top:345px" width="107" height="16" shape-rendering="crispEdges"><rect x="0.00" y="0" width="3.96" height="4" fill="#999" fill-opacity="0.12"/><rect x="19.81" y="0" width="3.96" height="4" fill="#777" fill-opacity="0.04"/><rect x="23.78" y="0" width="3.96" height="4" fill="#7f8590" fill-opacity="0.09"/><rect x="27.74" y="0" width="3.96" height="4" fill="#777" fill-opacity="0.12"/><rect x="31.70" y="0" width="3.96" height="4" fill="#7f8590" fill-opacity="0.08"/><rect x="35.67" y="0" width="3.96" height="4" fill="#9a9490" fill-opacity="0.05"/><rect x="39.63" y="0" width="3.96" height="4" fill="#999" fill-opacity="0.06"/><rect x="47.56" y="0" width="3.96" height="4" fill="#888" fill-opacity="0.09"/><rect x="51.52" y="0" width="3.96" height="4" fill="#8a8890" fill-opacity="0.14"/><rect x="55.48" y="0" width="3.96" height="4" fill="#aaa" fill-opacity="0.04"/><rect x="59.44" y="0" width="3.96" height="4" fill="#777" fill-opacity="0.06"/><rect x="63.41" y="0" width="3.96" height="4" fill="#7f8590" fill-opacity="0.06"/><rect x="71.33" y="0" width="3.96" height="4" fill="#777" fill-opacity="0.08"/><rect x="75.30" y="0" width="3.96" height="4" fill="#999" fill-opacity="0.17"/><rect x="99.07" y="0" width="3.96" height="4" fill="#777" fill-opacity="0.04"/><rect x="0.00" y="4" width="3.96" height="4" fill="#777" fill-opacity="0.32"/><rect x="7.93" y="4" width="3.96" height="4" fill="#7f8590" fill-opacity="0.52"/><rect x="15.85" y="4" width="3.96" height="4" fill="#9a9490" fill-opacity="0.30"/><rect x="19.81" y="4" width="3.96" height="4" fill="#8a8890" fill-opacity="0.54"/><rect x="23.78" y="4" width="3.96" height="4" fill="#999" fill-opacity="0.29"/><rect x="27.74" y="4" width="3.96" height="4" fill="#7f8590" fill-opacity="0.53"/><rect x="31.70" y="4" width="3.96" height="4" fill="#777" fill-opacity="0.57"/><rect x="35.67" y="4" width="3.96" height="4" fill="#8a8890" fill-opacity="0.43"/><rect x="39.63" y="4" width="3.96" height="4" fill="#888" fill-opacity="0.54"/><rect x="43.59" y="4" width="3.96" height="4" fill="#888" fill-opacity="0.25"/><rect x="47.56" y="4" width="3.96" height="4" fill="#7f8590" fill-opacity="0.26"/><rect x="59.44" y="4" width="3.96" height="4" fill="#7f8590" fill-opacity="0.23"/><rect x="63.41" y="4" width="3.96" height="4" fill="#aaa" fill-opacity="0.43"/><rect x="75.30" y="4" width="3.96" height="4" fill="#888" fill-opacity="0.68"/><rect x="79.26" y="4" width="3.96" height="4" fill="#888" fill-opacity="0.46"/><rect x="83.22" y="4" width="3.96" height="4" fill="#7f8590" fill-opacity="0.32"/><rect x="87.19" y="4" width="3.96" height="4" fill="#999" fill-opacity="0.28"/><rect x="91.15" y="4" width="3.96" height="4" fill="#9a9490" fill-opacity="0.40"/><rect x="95.11" y="4" width="3.96" height="4" fill="#7f8590" fill-opacity="0.67"/><rect x="0.00" y="8" width="3.96" height="4" fill="#8a8890" fill-opacity="0.48"/><rect x="3.96" y="8" width="3.96" height="4" fill="#aaa" fill-opacity="0.56"/><rect x="7.93" y="8" width="3.96" height="4" fill="#888" fill-opacity="0.70"/><rect x="11.89" y="8" width="3.96" height="4" fill="#888" fill-opacity="0.36"/><rect x="15.85" y="8" width="3.96" height="4" fill="#9a9490" fill-opacity="0.50"/><rect x="23.78" y="8" width="3.96" height="4" fill="#777" fill-opacity="0.21"/><rect x="27.74" y="8" width="3.96" height="4" fill="#888" fill-opacity="0.28"/><rect x="31.70" y="8" width="3.96" height="4" fill="#888" fill-opacity="0.22"/><rect x="35.67" y="8" width="3.96" height="4" fill="#7f8590" fill-opacity="0.53"/><rect x="39.63" y="8" width="3.96" height="4" fill="#aaa" fill-opacity="0.22"/><rect x="43.59" y="8" width="3.96" height="4" fill="#aaa" fill-opacity="0.39"/><rect x="51.52" y="8" width="3.96" height="4" fill="#aaa" fill-opacity="0.55"/><rect x="55.48" y="8" width="3.96" height="4" fill="#8a8890" fill-opacity="0.57"/><rect x="59.44" y="8" width="3.96" height="4" fill="#777" fill-opacity="0.31"/><rect x="63.41" y="8" width="3.96" height="4" fill="#aaa" fill-opacity="0.69"/><rect x="67.37" y="8" width="3.96" height="4" fill="#aaa" fill-opacity="0.25"/><rect x="71.33" y="8" width="3.96" height="4" fill="#777" fill-opacity="0.35"/><rect x="75.30" y="8" width="3.96" height="4" fill="#7f8590" fill-opacity="0.61"/><rect x="79.26" y="8" width="3.96" height="4" fill="#8a8890" fill-opacity="0.37"/><rect x="83.22" y="8" width="3.96" height="4" fill="#999" fill-opacity="0.38"/><rect x="87.19" y="8" width="3.96" height="4" fill="#999" fill-opacity="0.60"/><rect x="91.15" y="8" width="3.96" height="4" fill="#8a8890" fill-opacity="0.51"/><rect x="95.11" y="8" width="3.96" height="4" fill="#777" fill-opacity="0.52"/><rect x="99.07" y="8" width="3.96" height="4" fill="#9a9490" fill-opacity="0.22"/><rect x="103.04" y="8" width="3.96" height="4" fill="#7f8590" fill-opacity="0.38"/><rect x="0.00" y="12" width="3.96" height="4" fill="#7f8590" fill-opacity="0.10"/><rect x="7.93" y="12" width="3.96" height="4" fill="#888" fill-opacity="0.13"/><rect x="11.89" y="12" width="3.96" height="4" fill="#999" fill-opacity="0.09"/><rect x="23.78" y="12" width="3.96" height="4" fill="#8a8890" fill-opacity="0.09"/><rect x="55.48" y="12" width="3.96" height="4" fill="#7f8590" fill-opacity="0.13"/><rect x="59.44" y="12" width="3.96" height="4" fill="#7f8590" fill-opacity="0.05"/><rect x="79.26" y="12" width="3.96" height="4" fill="#777" fill-opacity="0.07"/><rect x="83.22" y="12" width="3.96" height="4" fill="#7f8590" fill-opacity="0.08"/><rect x="87.19" y="12" width="3.96" height="4" fill="#777" fill-opacity="0.14"/><rect x="91.15" y="12" width="3.96" height="4" fill="#8a8890" fill-opacity="0.07"/><rect x="103.04" y="12" width="3.96" height="4" fill="#888" fill-opacity="0.14"/></svg>
<svg class="abs" style="left:465px;top:345px" width="84" height="16" shape-rendering="crispEdges"><rect x="4.00" y="0" width="4.00" height="4" fill="#7f8590" fill-opacity="0.14"/><rect x="16.00" y="0" width="4.00" height="4" fill="#888" fill-opacity="0.09"/><rect x="32.00" y="0" width="4.00" height="4" fill="#7f8590" fill-opacity="0.11"/><rect x="44.00" y="0" width="4.00" height="4" fill="#7f8590" fill-opacity="0.11"/><rect x="48.00" y="0" width="4.00" height="4" fill="#999" fill-opacity="0.07"/><rect x="80.00" y="0" width="4.00" height="4" fill="#888" fill-opacity="0.08"/><rect x="0.00" y="4" width="4.00" height="4" fill="#777" fill-opacity="0.70"/><rect x="4.00" y="4" width="4.00" height="4" fill="#888" fill-opacity="0.54"/><rect x="8.00" y="4" width="4.00" height="4" fill="#aaa" fill-opacity="0.71"/><rect x="12.00" y="4" width="4.00" height="4" fill="#999" fill-opacity="0.35"/><rect x="16.00" y="4" width="4.00" height="4" fill="#777" fill-opacity="0.53"/><rect x="20.00" y="4" width="4.00" height="4" fill="#8a8890" fill-opacity="0.66"/><rect x="24.00" y="4" width="4.00" height="4" fill="#aaa" fill-opacity="0.41"/><rect x="28.00" y="4" width="4.00" height="4" fill="#7f8590" fill-opacity="0.32"/><rect x="32.00" y="4" width="4.00" height="4" fill="#999" fill-opacity="0.21"/><rect x="36.00" y="4" width="4.00" height="4" fill="#7f8590" fill-opacity="0.41"/><rect x="40.00" y="4" width="4.00" height="4" fill="#7f8590" fill-opacity="0.64"/><rect x="44.00" y="4" width="4.00" height="4" fill="#8a8890" fill-opacity="0.59"/><rect x="48.00" y="4" width="4.00" height="4" fill="#7f8590" fill-opacity="0.55"/><rect x="52.00" y="4" width="4.00" height="4" fill="#7f8590" fill-opacity="0.60"/><rect x="56.00" y="4" width="4.00" height="4" fill="#888" fill-opacity="0.32"/><rect x="60.00" y="4" width="4.00" height="4" fill="#999" fill-opacity="0.44"/><rect x="64.00" y="4" width="4.00" height="4" fill="#8a8890" fill-opacity="0.56"/><rect x="68.00" y="4" width="4.00" height="4" fill="#7f8590" fill-opacity="0.41"/><rect x="72.00" y="4" width="4.00" height="4" fill="#8a8890" fill-opacity="0.33"/><rect x="76.00" y="4" width="4.00" height="4" fill="#aaa" fill-opacity="0.21"/><rect x="80.00" y="4" width="4.00" height="4" fill="#aaa" fill-opacity="0.55"/><rect x="0.00" y="8" width="4.00" height="4" fill="#aaa" fill-opacity="0.54"/><rect x="4.00" y="8" width="4.00" height="4" fill="#777" fill-opacity="0.63"/><rect x="8.00" y="8" width="4.00" height="4" fill="#888" fill-opacity="0.48"/><rect x="12.00" y="8" width="4.00" height="4" fill="#888" fill-opacity="0.69"/><rect x="16.00" y="8" width="4.00" height="4" fill="#9a9490" fill-opacity="0.25"/><rect x="20.00" y="8" width="4.00" height="4" fill="#8a8890" fill-opacity="0.31"/><rect x="24.00" y="8" width="4.00" height="4" fill="#aaa" fill-opacity="0.53"/><rect x="28.00" y="8" width="4.00" height="4" fill="#7f8590" fill-opacity="0.38"/><rect x="36.00" y="8" width="4.00" height="4" fill="#8a8890" fill-opacity="0.56"/><rect x="40.00" y="8" width="4.00" height="4" fill="#7f8590" fill-opacity="0.68"/><rect x="48.00" y="8" width="4.00" height="4" fill="#999" fill-opacity="0.23"/><rect x="52.00" y="8" width="4.00" height="4" fill="#777" fill-opacity="0.23"/><rect x="56.00" y="8" width="4.00" height="4" fill="#7f8590" fill-opacity="0.42"/><rect x="60.00" y="8" width="4.00" height="4" fill="#777" fill-opacity="0.50"/><rect x="64.00" y="8" width="4.00" height="4" fill="#9a9490" fill-opacity="0.59"/><rect x="80.00" y="8" width="4.00" height="4" fill="#aaa" fill-opacity="0.29"/><rect x="0.00" y="12" width="4.00" height="4" fill="#888" fill-opacity="0.13"/><rect x="12.00" y="12" width="4.00" height="4" fill="#999" fill-opacity="0.15"/><rect x="28.00" y="12" width="4.00" height="4" fill="#aaa" fill-opacity="0.15"/><rect x="36.00" y="12" width="4.00" height="4" fill="#999" fill-opacity="0.13"/><rect x="44.00" y="12" width="4.00" height="4" fill="#7f8590" fill-opacity="0.11"/><rect x="48.00" y="12" width="4.00" height="4" fill="#888" fill-opacity="0.08"/><rect x="64.00" y="12" width="4.00" height="4" fill="#999" fill-opacity="0.11"/><rect x="72.00" y="12" width="4.00" height="4" fill="#7f8590" fill-opacity="0.11"/><rect x="80.00" y="12" width="4.00" height="4" fill="#8a8890" fill-opacity="0.07"/></svg>
<svg class="abs" style="left:575px;top:338px" width="55" height="16" shape-rendering="crispEdges"><rect x="0.00" y="0" width="3.93" height="4" fill="#999" fill-opacity="0.17"/><rect x="7.86" y="0" width="3.93" height="4" fill="#7f8590" fill-opacity="0.17"/><rect x="19.64" y="0" width="3.93" height="4" fill="#999" fill-opacity="0.05"/><rect x="23.57" y="0" width="3.93" height="4" fill="#888" fill-opacity="0.06"/><rect x="31.43" y="0" width="3.93" height="4" fill="#aaa" fill-opacity="0.11"/><rect x="35.36" y="0" width="3.93" height="4" fill="#aaa" fill-opacity="0.18"/><rect x="0.00" y="4" width="3.93" height="4" fill="#9a9490" fill-opacity="0.67"/><rect x="3.93" y="4" width="3.93" height="4" fill="#888" fill-opacity="0.64"/><rect x="7.86" y="4" width="3.93" height="4" fill="#777" fill-opacity="0.31"/><rect x="11.79" y="4" width="3.93" height="4" fill="#777" fill-opacity="0.43"/><rect x="15.71" y="4" width="3.93" height="4" fill="#888" fill-opacity="0.34"/><rect x="19.64" y="4" width="3.93" height="4" fill="#9a9490" fill-opacity="0.45"/><rect x="23.57" y="4" width="3.93" height="4" fill="#888" fill-opacity="0.44"/><rect x="27.50" y="4" width="3.93" height="4" fill="#888" fill-opacity="0.33"/><rect x="31.43" y="4" width="3.93" height="4" fill="#777" fill-opacity="0.65"/><rect x="35.36" y="4" width="3.93" height="4" fill="#7f8590" fill-opacity="0.37"/><rect x="39.29" y="4" width="3.93" height="4" fill="#aaa" fill-opacity="0.55"/><rect x="43.21" y="4" width="3.93" height="4" fill="#7f8590" fill-opacity="0.42"/><rect x="47.14" y="4" width="3.93" height="4" fill="#7f8590" fill-opacity="0.53"/><rect x="51.07" y="4" width="3.93" height="4" fill="#777" fill-opacity="0.21"/><rect x="0.00" y="8" width="3.93" height="4" fill="#999" fill-opacity="0.68"/><rect x="3.93" y="8" width="3.93" height="4" fill="#8a8890" fill-opacity="0.25"/><rect x="7.86" y="8" width="3.93" height="4" fill="#777" fill-opacity="0.67"/><rect x="11.79" y="8" width="3.93" height="4" fill="#888" fill-opacity="0.42"/><rect x="15.71" y="8" width="3.93" height="4" fill="#999" fill-opacity="0.65"/><rect x="19.64" y="8" width="3.93" height="4" fill="#9a9490" fill-opacity="0.60"/><rect x="23.57" y="8" width="3.93" height="4" fill="#8a8890" fill-opacity="0.31"/><rect x="27.50" y="8" width="3.93" height="4" fill="#777" fill-opacity="0.33"/><rect x="31.43" y="8" width="3.93" height="4" fill="#aaa" fill-opacity="0.35"/><rect x="35.36" y="8" width="3.93" height="4" fill="#999" fill-opacity="0.37"/><rect x="39.29" y="8" width="3.93" height="4" fill="#888" fill-opacity="0.38"/><rect x="43.21" y="8" width="3.93" height="4" fill="#999" fill-opacity="0.61"/><rect x="47.14" y="8" width="3.93" height="4" fill="#888" fill-opacity="0.57"/><rect x="51.07" y="8" width="3.93" height="4" fill="#aaa" fill-opacity="0.53"/><rect x="3.93" y="12" width="3.93" height="4" fill="#8a8890" fill-opacity="0.10"/><rect x="11.79" y="12" width="3.93" height="4" fill="#777" fill-opacity="0.07"/><rect x="15.71" y="12" width="3.93" height="4" fill="#8a8890" fill-opacity="0.13"/></svg>
<svg class="abs" style="left:575px;top:352px" width="26" height="16" shape-rendering="crispEdges"><rect x="4.33" y="0" width="4.33" height="4" fill="#8a8890" fill-opacity="0.15"/><rect x="13.00" y="0" width="4.33" height="4" fill="#aaa" fill-opacity="0.15"/><rect x="17.33" y="0" width="4.33" height="4" fill="#7f8590" fill-opacity="0.16"/><rect x="21.67" y="0" width="4.33" height="4" fill="#888" fill-opacity="0.18"/><rect x="0.00" y="4" width="4.33" height="4" fill="#999" fill-opacity="0.49"/><rect x="4.33" y="4" width="4.33" height="4" fill="#777" fill-opacity="0.30"/><rect x="8.67" y="4" width="4.33" height="4" fill="#7f8590" fill-opacity="0.42"/><rect x="13.00" y="4" width="4.33" height="4" fill="#8a8890" fill-opacity="0.68"/><rect x="17.33" y="4" width="4.33" height="4" fill="#777" fill-opacity="0.22"/><rect x="21.67" y="4" width="4.33" height="4" fill="#7f8590" fill-opacity="0.42"/><rect x="4.33" y="8" width="4.33" height="4" fill="#8a8890" fill-opacity="0.21"/><rect x="8.67" y="8" width="4.33" height="4" fill="#7f8590" fill-opacity="0.72"/><rect x="17.33" y="8" width="4.33" height="4" fill="#777" fill-opacity="0.41"/><rect x="21.67" y="8" width="4.33" height="4" fill="#888" fill-opacity="0.45"/><rect x="4.33" y="12" width="4.33" height="4" fill="#7f8590" fill-opacity="0.03"/><rect x="8.67" y="12" width="4.33" height="4" fill="#777" fill-opacity="0.15"/><rect x="13.00" y="12" width="4.33" height="4" fill="#8a8890" fill-opacity="0.04"/><rect x="17.33" y="12" width="4.33" height="4" fill="#888" fill-opacity="0.12"/></svg>
<svg class="abs" style="left:234px;top:386px" width="99" height="16" shape-rendering="crispEdges"><rect x="7.92" y="0" width="3.96" height="4" fill="#7fb9e8" fill-opacity="0.16"/><rect x="19.80" y="0" width="3.96" height="4" fill="#7fb9e8" fill-opacity="0.14"/><rect x="39.60" y="0" width="3.96" height="4" fill="#4aaee6" fill-opacity="0.05"/><rect x="43.56" y="0" width="3.96" height="4" fill="#5fc6ee" fill-opacity="0.14"/><rect x="47.52" y="0" width="3.96" height="4" fill="#7fb9e8" fill-opacity="0.09"/><rect x="67.32" y="0" width="3.96" height="4" fill="#7fb9e8" fill-opacity="0.19"/><rect x="71.28" y="0" width="3.96" height="4" fill="#5cb8ea" fill-opacity="0.15"/><rect x="79.20" y="0" width="3.96" height="4" fill="#5cb8ea" fill-opacity="0.19"/><rect x="87.12" y="0" width="3.96" height="4" fill="#3da5e0" fill-opacity="0.10"/><rect x="0.00" y="4" width="3.96" height="4" fill="#4aaee6" fill-opacity="0.35"/><rect x="3.96" y="4" width="3.96" height="4" fill="#5fc6ee" fill-opacity="0.54"/><rect x="7.92" y="4" width="3.96" height="4" fill="#4aaee6" fill-opacity="0.52"/><rect x="11.88" y="4" width="3.96" height="4" fill="#78c4ee" fill-opacity="0.51"/><rect x="15.84" y="4" width="3.96" height="4" fill="#5cb8ea" fill-opacity="0.71"/><rect x="19.80" y="4" width="3.96" height="4" fill="#5fc6ee" fill-opacity="0.56"/><rect x="23.76" y="4" width="3.96" height="4" fill="#3da5e0" fill-opacity="0.32"/><rect x="27.72" y="4" width="3.96" height="4" fill="#78c4ee" fill-opacity="0.20"/><rect x="31.68" y="4" width="3.96" height="4" fill="#4aaee6" fill-opacity="0.28"/><rect x="35.64" y="4" width="3.96" height="4" fill="#5fc6ee" fill-opacity="0.27"/><rect x="39.60" y="4" width="3.96" height="4" fill="#5fc6ee" fill-opacity="0.71"/><rect x="43.56" y="4" width="3.96" height="4" fill="#78c4ee" fill-opacity="0.68"/><rect x="47.52" y="4" width="3.96" height="4" fill="#3da5e0" fill-opacity="0.48"/><rect x="51.48" y="4" width="3.96" height="4" fill="#7fb9e8" fill-opacity="0.30"/><rect x="59.40" y="4" width="3.96" height="4" fill="#7fb9e8" fill-opacity="0.52"/><rect x="63.36" y="4" width="3.96" height="4" fill="#78c4ee" fill-opacity="0.57"/><rect x="67.32" y="4" width="3.96" height="4" fill="#3da5e0" fill-opacity="0.20"/><rect x="71.28" y="4" width="3.96" height="4" fill="#78c4ee" fill-opacity="0.25"/><rect x="75.24" y="4" width="3.96" height="4" fill="#5fc6ee" fill-opacity="0.32"/><rect x="79.20" y="4" width="3.96" height="4" fill="#5fc6ee" fill-opacity="0.33"/><rect x="83.16" y="4" width="3.96" height="4" fill="#5cb8ea" fill-opacity="0.46"/><rect x="87.12" y="4" width="3.96" height="4" fill="#5cb8ea" fill-opacity="0.30"/><rect x="91.08" y="4" width="3.96" height="4" fill="#5fc6ee" fill-opacity="0.35"/><rect x="95.04" y="4" width="3.96" height="4" fill="#5fc6ee" fill-opacity="0.41"/><rect x="0.00" y="8" width="3.96" height="4" fill="#3da5e0" fill-opacity="0.33"/><rect x="3.96" y="8" width="3.96" height="4" fill="#7fb9e8" fill-opacity="0.26"/><rect x="7.92" y="8" width="3.96" height="4" fill="#78c4ee" fill-opacity="0.24"/><rect x="11.88" y="8" width="3.96" height="4" fill="#5fc6ee" fill-opacity="0.38"/><rect x="15.84" y="8" width="3.96" height="4" fill="#5cb8ea" fill-opacity="0.25"/><rect x="23.76" y="8" width="3.96" height="4" fill="#5fc6ee" fill-opacity="0.45"/><rect x="27.72" y="8" width="3.96" height="4" fill="#78c4ee" fill-opacity="0.68"/><rect x="31.68" y="8" width="3.96" height="4" fill="#5fc6ee" fill-opacity="0.69"/><rect x="35.64" y="8" width="3.96" height="4" fill="#78c4ee" fill-opacity="0.70"/><rect x="39.60" y="8" width="3.96" height="4" fill="#5cb8ea" fill-opacity="0.38"/><rect x="43.56" y="8" width="3.96" height="4" fill="#4aaee6" fill-opacity="0.21"/><rect x="47.52" y="8" width="3.96" height="4" fill="#3da5e0" fill-opacity="0.65"/><rect x="51.48" y="8" width="3.96" height="4" fill="#4aaee6" fill-opacity="0.64"/><rect x="55.44" y="8" width="3.96" height="4" fill="#4aaee6" fill-opacity="0.53"/><rect x="59.40" y="8" width="3.96" height="4" fill="#78c4ee" fill-opacity="0.25"/><rect x="63.36" y="8" width="3.96" height="4" fill="#7fb9e8" fill-opacity="0.53"/><rect x="67.32" y="8" width="3.96" height="4" fill="#5cb8ea" fill-opacity="0.29"/><rect x="71.28" y="8" width="3.96" height="4" fill="#7fb9e8" fill-opacity="0.32"/><rect x="75.24" y="8" width="3.96" height="4" fill="#78c4ee" fill-opacity="0.22"/><rect x="83.16" y="8" width="3.96" height="4" fill="#4aaee6" fill-opacity="0.49"/><rect x="87.12" y="8" width="3.96" height="4" fill="#5fc6ee" fill-opacity="0.22"/><rect x="91.08" y="8" width="3.96" height="4" fill="#3da5e0" fill-opacity="0.54"/><rect x="95.04" y="8" width="3.96" height="4" fill="#4aaee6" fill-opacity="0.28"/><rect x="7.92" y="12" width="3.96" height="4" fill="#7fb9e8" fill-opacity="0.10"/><rect x="11.88" y="12" width="3.96" height="4" fill="#78c4ee" fill-opacity="0.07"/><rect x="15.84" y="12" width="3.96" height="4" fill="#3da5e0" fill-opacity="0.07"/><rect x="19.80" y="12" width="3.96" height="4" fill="#5cb8ea" fill-opacity="0.06"/><rect x="43.56" y="12" width="3.96" height="4" fill="#4aaee6" fill-opacity="0.13"/><rect x="59.40" y="12" width="3.96" height="4" fill="#4aaee6" fill-opacity="0.08"/><rect x="67.32" y="12" width="3.96" height="4" fill="#4aaee6" fill-opacity="0.03"/><rect x="75.24" y="12" width="3.96" height="4" fill="#3da5e0" fill-opacity="0.13"/><rect x="79.20" y="12" width="3.96" height="4" fill="#78c4ee" fill-opacity="0.07"/><rect x="83.16" y="12" width="3.96" height="4" fill="#7fb9e8" fill-opacity="0.04"/><rect x="95.04" y="12" width="3.96" height="4" fill="#3da5e0" fill-opacity="0.05"/></svg>
<svg class="abs" style="left:351px;top:386px" width="107" height="16" shape-rendering="crispEdges"><rect x="0.00" y="0" width="3.96" height="4" fill="#999" fill-opacity="0.06"/><rect x="7.93" y="0" width="3.96" height="4" fill="#999" fill-opacity="0.17"/><rect x="15.85" y="0" width="3.96" height="4" fill="#777" fill-opacity="0.18"/><rect x="19.81" y="0" width="3.96" height="4" fill="#7f8590" fill-opacity="0.12"/><rect x="31.70" y="0" width="3.96" height="4" fill="#999" fill-opacity="0.12"/><rect x="35.67" y="0" width="3.96" height="4" fill="#999" fill-opacity="0.16"/><rect x="39.63" y="0" width="3.96" height="4" fill="#888" fill-opacity="0.08"/><rect x="47.56" y="0" width="3.96" height="4" fill="#888" fill-opacity="0.09"/><rect x="51.52" y="0" width="3.96" height="4" fill="#999" fill-opacity="0.16"/><rect x="55.48" y="0" width="3.96" height="4" fill="#8a8890" fill-opacity="0.14"/><rect x="63.41" y="0" width="3.96" height="4" fill="#777" fill-opacity="0.06"/><rect x="75.30" y="0" width="3.96" height="4" fill="#777" fill-opacity="0.10"/><rect x="83.22" y="0" width="3.96" height="4" fill="#888" fill-opacity="0.13"/><rect x="95.11" y="0" width="3.96" height="4" fill="#9a9490" fill-opacity="0.07"/><rect x="99.07" y="0" width="3.96" height="4" fill="#9a9490" fill-opacity="0.05"/><rect x="0.00" y="4" width="3.96" height="4" fill="#888" fill-opacity="0.29"/><rect x="3.96" y="4" width="3.96" height="4" fill="#aaa" fill-opacity="0.57"/><rect x="7.93" y="4" width="3.96" height="4" fill="#777" fill-opacity="0.36"/><rect x="11.89" y="4" width="3.96" height="4" fill="#8a8890" fill-opacity="0.58"/><rect x="15.85" y="4" width="3.96" height="4" fill="#9a9490" fill-opacity="0.68"/><rect x="19.81" y="4" width="3.96" height="4" fill="#aaa" fill-opacity="0.37"/><rect x="23.78" y="4" width="3.96" height="4" fill="#777" fill-opacity="0.69"/><rect x="27.74" y="4" width="3.96" height="4" fill="#8a8890" fill-opacity="0.67"/><rect x="31.70" y="4" width="3.96" height="4" fill="#888" fill-opacity="0.55"/><rect x="35.67" y="4" width="3.96" height="4" fill="#999" fill-opacity="0.63"/><rect x="39.63" y="4" width="3.96" height="4" fill="#9a9490" fill-opacity="0.57"/><rect x="43.59" y="4" width="3.96" height="4" fill="#9a9490" fill-opacity="0.20"/><rect x="55.48" y="4" width="3.96" height="4" fill="#888" fill-opacity="0.39"/><rect x="59.44" y="4" width="3.96" height="4" fill="#999" fill-opacity="0.65"/><rect x="63.41" y="4" width="3.96" height="4" fill="#9a9490" fill-opacity="0.65"/><rect x="67.37" y="4" width="3.96" height="4" fill="#aaa" fill-opacity="0.23"/><rect x="71.33" y="4" width="3.96" height="4" fill="#8a8890" fill-opacity="0.58"/><rect x="75.30" y="4" width="3.96" height="4" fill="#9a9490" fill-opacity="0.48"/><rect x="79.26" y="4" width="3.96" height="4" fill="#777" fill-opacity="0.33"/><rect x="83.22" y="4" width="3.96" height="4" fill="#777" fill-opacity="0.29"/><rect x="87.19" y="4" width="3.96" height="4" fill="#777" fill-opacity="0.49"/><rect x="91.15" y="4" width="3.96" height="4" fill="#7f8590" fill-opacity="0.68"/><rect x="95.11" y="4" width="3.96" height="4" fill="#9a9490" fill-opacity="0.21"/><rect x="99.07" y="4" width="3.96" height="4" fill="#888" fill-opacity="0.44"/><rect x="103.04" y="4" width="3.96" height="4" fill="#aaa" fill-opacity="0.25"/><rect x="0.00" y="8" width="3.96" height="4" fill="#999" fill-opacity="0.29"/><rect x="3.96" y="8" width="3.96" height="4" fill="#9a9490" fill-opacity="0.46"/><rect x="7.93" y="8" width="3.96" height="4" fill="#777" fill-opacity="0.26"/><rect x="11.89" y="8" width="3.96" height="4" fill="#9a9490" fill-opacity="0.27"/><rect x="15.85" y="8" width="3.96" height="4" fill="#7f8590" fill-opacity="0.32"/><rect x="19.81" y="8" width="3.96" height="4" fill="#888" fill-opacity="0.59"/><rect x="27.74" y="8" width="3.96" height="4" fill="#7f8590" fill-opacity="0.53"/><rect x="31.70" y="8" width="3.96" height="4" fill="#9a9490" fill-opacity="0.64"/><rect x="35.67" y="8" width="3.96" height="4" fill="#777" fill-opacity="0.70"/><rect x="39.63" y="8" width="3.96" height="4" fill="#888" fill-opacity="0.38"/><rect x="43.59" y="8" width="3.96" height="4" fill="#aaa" fill-opacity="0.57"/><rect x="51.52" y="8" width="3.96" height="4" fill="#aaa" fill-opacity="0.67"/><rect x="55.48" y="8" width="3.96" height="4" fill="#999" fill-opacity="0.49"/><rect x="59.44" y="8" width="3.96" height="4" fill="#999" fill-opacity="0.70"/><rect x="63.41" y="8" width="3.96" height="4" fill="#7f8590" fill-opacity="0.42"/><rect x="67.37" y="8" width="3.96" height="4" fill="#888" fill-opacity="0.26"/><rect x="71.33" y="8" width="3.96" height="4" fill="#9a9490" fill-opacity="0.43"/><rect x="75.30" y="8" width="3.96" height="4" fill="#8a8890" fill-opacity="0.32"/><rect x="83.22" y="8" width="3.96" height="4" fill="#7f8590" fill-opacity="0.69"/><rect x="87.19" y="8" width="3.96" height="4" fill="#777" fill-opacity="0.71"/><rect x="91.15" y="8" width="3.96" height="4" fill="#999" fill-opacity="0.53"/><rect x="99.07" y="8" width="3.96" height="4" fill="#aaa" fill-opacity="0.53"/><rect x="3.96" y="12" width="3.96" height="4" fill="#8a8890" fill-opacity="0.09"/><rect x="7.93" y="12" width="3.96" height="4" fill="#777" fill-opacity="0.03"/><rect x="11.89" y="12" width="3.96" height="4" fill="#777" fill-opacity="0.11"/><rect x="15.85" y="12" width="3.96" height="4" fill="#9a9490" fill-opacity="0.15"/><rect x="23.78" y="12" width="3.96" height="4" fill="#888" fill-opacity="0.10"/><rect x="27.74" y="12" width="3.96" height="4" fill="#999" fill-opacity="0.09"/><rect x="39.63" y="12" width="3.96" height="4" fill="#7f8590" fill-opacity="0.12"/><rect x="63.41" y="12" width="3.96" height="4" fill="#8a8890" fill-opacity="0.12"/><rect x="71.33" y="12" width="3.96" height="4" fill="#aaa" fill-opacity="0.09"/><rect x="75.30" y="12" width="3.96" height="4" fill="#888" fill-opacity="0.06"/><rect x="79.26" y="12" width="3.96" height="4" fill="#9a9490" fill-opacity="0.10"/><rect x="83.22" y="12" width="3.96" height="4" fill="#888" fill-opacity="0.14"/><rect x="91.15" y="12" width="3.96" height="4" fill="#8a8890" fill-opacity="0.10"/><rect x="95.11" y="12" width="3.96" height="4" fill="#888" fill-opacity="0.14"/><rect x="99.07" y="12" width="3.96" height="4" fill="#888" fill-opacity="0.12"/></svg>
<svg class="abs" style="left:461px;top:386px" width="84" height="16" shape-rendering="crispEdges"><rect x="4.00" y="0" width="4.00" height="4" fill="#9a9490" fill-opacity="0.15"/><rect x="8.00" y="0" width="4.00" height="4" fill="#7f8590" fill-opacity="0.11"/><rect x="32.00" y="0" width="4.00" height="4" fill="#888" fill-opacity="0.15"/><rect x="0.00" y="4" width="4.00" height="4" fill="#777" fill-opacity="0.65"/><rect x="4.00" y="4" width="4.00" height="4" fill="#777" fill-opacity="0.49"/><rect x="8.00" y="4" width="4.00" height="4" fill="#9a9490" fill-opacity="0.70"/><rect x="12.00" y="4" width="4.00" height="4" fill="#999" fill-opacity="0.64"/><rect x="16.00" y="4" width="4.00" height="4" fill="#8a8890" fill-opacity="0.52"/><rect x="20.00" y="4" width="4.00" height="4" fill="#999" fill-opacity="0.56"/><rect x="24.00" y="4" width="4.00" height="4" fill="#8a8890" fill-opacity="0.35"/><rect x="28.00" y="4" width="4.00" height="4" fill="#7f8590" fill-opacity="0.51"/><rect x="32.00" y="4" width="4.00" height="4" fill="#aaa" fill-opacity="0.61"/><rect x="40.00" y="4" width="4.00" height="4" fill="#9a9490" fill-opacity="0.36"/><rect x="44.00" y="4" width="4.00" height="4" fill="#9a9490" fill-opacity="0.28"/><rect x="48.00" y="4" width="4.00" height="4" fill="#aaa" fill-opacity="0.32"/><rect x="56.00" y="4" width="4.00" height="4" fill="#aaa" fill-opacity="0.64"/><rect x="60.00" y="4" width="4.00" height="4" fill="#8a8890" fill-opacity="0.37"/><rect x="64.00" y="4" width="4.00" height="4" fill="#777" fill-opacity="0.70"/><rect x="68.00" y="4" width="4.00" height="4" fill="#8a8890" fill-opacity="0.49"/><rect x="72.00" y="4" width="4.00" height="4" fill="#999" fill-opacity="0.48"/><rect x="76.00" y="4" width="4.00" height="4" fill="#9a9490" fill-opacity="0.72"/><rect x="80.00" y="4" width="4.00" height="4" fill="#8a8890" fill-opacity="0.58"/><rect x="0.00" y="8" width="4.00" height="4" fill="#9a9490" fill-opacity="0.39"/><rect x="4.00" y="8" width="4.00" height="4" fill="#777" fill-opacity="0.44"/><rect x="8.00" y="8" width="4.00" height="4" fill="#777" fill-opacity="0.47"/><rect x="12.00" y="8" width="4.00" height="4" fill="#7f8590" fill-opacity="0.46"/><rect x="16.00" y="8" width="4.00" height="4" fill="#888" fill-opacity="0.50"/><rect x="24.00" y="8" width="4.00" height="4" fill="#9a9490" fill-opacity="0.43"/><rect x="28.00" y="8" width="4.00" height="4" fill="#7f8590" fill-opacity="0.51"/><rect x="32.00" y="8" width="4.00" height="4" fill="#888" fill-opacity="0.62"/><rect x="36.00" y="8" width="4.00" height="4" fill="#777" fill-opacity="0.39"/><rect x="40.00" y="8" width="4.00" height="4" fill="#777" fill-opacity="0.47"/><rect x="44.00" y="8" width="4.00" height="4" fill="#999" fill-opacity="0.35"/><rect x="48.00" y="8" width="4.00" height="4" fill="#8a8890" fill-opacity="0.71"/><rect x="52.00" y="8" width="4.00" height="4" fill="#aaa" fill-opacity="0.47"/><rect x="56.00" y="8" width="4.00" height="4" fill="#888" fill-opacity="0.46"/><rect x="60.00" y="8" width="4.00" height="4" fill="#9a9490" fill-opacity="0.23"/><rect x="64.00" y="8" width="4.00" height="4" fill="#7f8590" fill-opacity="0.38"/><rect x="68.00" y="8" width="4.00" height="4" fill="#8a8890" fill-opacity="0.22"/><rect x="72.00" y="8" width="4.00" height="4" fill="#7f8590" fill-opacity="0.20"/><rect x="76.00" y="8" width="4.00" height="4" fill="#999" fill-opacity="0.20"/><rect x="80.00" y="8" width="4.00" height="4" fill="#777" fill-opacity="0.25"/><rect x="4.00" y="12" width="4.00" height="4" fill="#9a9490" fill-opacity="0.09"/><rect x="24.00" y="12" width="4.00" height="4" fill="#9a9490" fill-opacity="0.05"/><rect x="28.00" y="12" width="4.00" height="4" fill="#aaa" fill-opacity="0.05"/><rect x="36.00" y="12" width="4.00" height="4" fill="#9a9490" fill-opacity="0.04"/><rect x="48.00" y="12" width="4.00" height="4" fill="#7f8590" fill-opacity="0.13"/><rect x="52.00" y="12" width="4.00" height="4" fill="#999" fill-opacity="0.12"/><rect x="56.00" y="12" width="4.00" height="4" fill="#999" fill-opacity="0.06"/><rect x="60.00" y="12" width="4.00" height="4" fill="#777" fill-opacity="0.06"/><rect x="72.00" y="12" width="4.00" height="4" fill="#9a9490" fill-opacity="0.05"/><rect x="76.00" y="12" width="4.00" height="4" fill="#8a8890" fill-opacity="0.04"/></svg>
<svg class="abs" style="left:575px;top:376px" width="55" height="16" shape-rendering="crispEdges"><rect x="3.93" y="0" width="3.93" height="4" fill="#888" fill-opacity="0.14"/><rect x="7.86" y="0" width="3.93" height="4" fill="#9a9490" fill-opacity="0.07"/><rect x="15.71" y="0" width="3.93" height="4" fill="#aaa" fill-opacity="0.18"/><rect x="23.57" y="0" width="3.93" height="4" fill="#8a8890" fill-opacity="0.08"/><rect x="31.43" y="0" width="3.93" height="4" fill="#7f8590" fill-opacity="0.15"/><rect x="39.29" y="0" width="3.93" height="4" fill="#7f8590" fill-opacity="0.09"/><rect x="51.07" y="0" width="3.93" height="4" fill="#999" fill-opacity="0.07"/><rect x="0.00" y="4" width="3.93" height="4" fill="#999" fill-opacity="0.20"/><rect x="3.93" y="4" width="3.93" height="4" fill="#999" fill-opacity="0.39"/><rect x="7.86" y="4" width="3.93" height="4" fill="#8a8890" fill-opacity="0.40"/><rect x="11.79" y="4" width="3.93" height="4" fill="#8a8890" fill-opacity="0.70"/><rect x="15.71" y="4" width="3.93" height="4" fill="#888" fill-opacity="0.38"/><rect x="19.64" y="4" width="3.93" height="4" fill="#999" fill-opacity="0.44"/><rect x="23.57" y="4" width="3.93" height="4" fill="#7f8590" fill-opacity="0.22"/><rect x="27.50" y="4" width="3.93" height="4" fill="#888" fill-opacity="0.62"/><rect x="31.43" y="4" width="3.93" height="4" fill="#999" fill-opacity="0.25"/><rect x="35.36" y="4" width="3.93" height="4" fill="#9a9490" fill-opacity="0.61"/><rect x="39.29" y="4" width="3.93" height="4" fill="#aaa" fill-opacity="0.63"/><rect x="43.21" y="4" width="3.93" height="4" fill="#888" fill-opacity="0.39"/><rect x="47.14" y="4" width="3.93" height="4" fill="#9a9490" fill-opacity="0.40"/><rect x="51.07" y="4" width="3.93" height="4" fill="#9a9490" fill-opacity="0.69"/><rect x="0.00" y="8" width="3.93" height="4" fill="#7f8590" fill-opacity="0.65"/><rect x="3.93" y="8" width="3.93" height="4" fill="#999" fill-opacity="0.57"/><rect x="7.86" y="8" width="3.93" height="4" fill="#999" fill-opacity="0.43"/><rect x="11.79" y="8" width="3.93" height="4" fill="#9a9490" fill-opacity="0.41"/><rect x="15.71" y="8" width="3.93" height="4" fill="#777" fill-opacity="0.65"/><rect x="19.64" y="8" width="3.93" height="4" fill="#aaa" fill-opacity="0.25"/><rect x="23.57" y="8" width="3.93" height="4" fill="#8a8890" fill-opacity="0.60"/><rect x="27.50" y="8" width="3.93" height="4" fill="#888" fill-opacity="0.57"/><rect x="31.43" y="8" width="3.93" height="4" fill="#777" fill-opacity="0.40"/><rect x="35.36" y="8" width="3.93" height="4" fill="#888" fill-opacity="0.60"/><rect x="39.29" y="8" width="3.93" height="4" fill="#777" fill-opacity="0.54"/><rect x="43.21" y="8" width="3.93" height="4" fill="#aaa" fill-opacity="0.68"/><rect x="47.14" y="8" width="3.93" height="4" fill="#777" fill-opacity="0.35"/><rect x="51.07" y="8" width="3.93" height="4" fill="#999" fill-opacity="0.25"/><rect x="0.00" y="12" width="3.93" height="4" fill="#999" fill-opacity="0.12"/><rect x="3.93" y="12" width="3.93" height="4" fill="#8a8890" fill-opacity="0.13"/><rect x="19.64" y="12" width="3.93" height="4" fill="#777" fill-opacity="0.06"/><rect x="23.57" y="12" width="3.93" height="4" fill="#7f8590" fill-opacity="0.13"/><rect x="27.50" y="12" width="3.93" height="4" fill="#7f8590" fill-opacity="0.08"/><rect x="43.21" y="12" width="3.93" height="4" fill="#777" fill-opacity="0.14"/><rect x="47.14" y="12" width="3.93" height="4" fill="#9a9490" fill-opacity="0.04"/></svg>
<svg class="abs" style="left:575px;top:392px" width="26" height="16" shape-rendering="crispEdges"><rect x="4.33" y="0" width="4.33" height="4" fill="#888" fill-opacity="0.05"/><rect x="8.67" y="0" width="4.33" height="4" fill="#888" fill-opacity="0.16"/><rect x="13.00" y="0" width="4.33" height="4" fill="#999" fill-opacity="0.05"/><rect x="0.00" y="4" width="4.33" height="4" fill="#8a8890" fill-opacity="0.32"/><rect x="4.33" y="4" width="4.33" height="4" fill="#8a8890" fill-opacity="0.33"/><rect x="8.67" y="4" width="4.33" height="4" fill="#777" fill-opacity="0.50"/><rect x="13.00" y="4" width="4.33" height="4" fill="#7f8590" fill-opacity="0.60"/><rect x="17.33" y="4" width="4.33" height="4" fill="#aaa" fill-opacity="0.22"/><rect x="21.67" y="4" width="4.33" height="4" fill="#888" fill-opacity="0.56"/><rect x="0.00" y="8" width="4.33" height="4" fill="#999" fill-opacity="0.22"/><rect x="4.33" y="8" width="4.33" height="4" fill="#7f8590" fill-opacity="0.68"/><rect x="13.00" y="8" width="4.33" height="4" fill="#7f8590" fill-opacity="0.59"/><rect x="17.33" y="8" width="4.33" height="4" fill="#9a9490" fill-opacity="0.31"/><rect x="21.67" y="8" width="4.33" height="4" fill="#8a8890" fill-opacity="0.69"/><rect x="0.00" y="12" width="4.33" height="4" fill="#9a9490" fill-opacity="0.07"/><rect x="21.67" y="12" width="4.33" height="4" fill="#8a8890" fill-opacity="0.11"/></svg>
<svg class="abs" style="left:230px;top:420px" width="106" height="16" shape-rendering="crispEdges"><rect x="16.31" y="0" width="4.08" height="4" fill="#5fc6ee" fill-opacity="0.19"/><rect x="20.38" y="0" width="4.08" height="4" fill="#7fb9e8" fill-opacity="0.13"/><rect x="24.46" y="0" width="4.08" height="4" fill="#4aaee6" fill-opacity="0.08"/><rect x="28.54" y="0" width="4.08" height="4" fill="#4aaee6" fill-opacity="0.10"/><rect x="32.62" y="0" width="4.08" height="4" fill="#5cb8ea" fill-opacity="0.09"/><rect x="53.00" y="0" width="4.08" height="4" fill="#5cb8ea" fill-opacity="0.15"/><rect x="61.15" y="0" width="4.08" height="4" fill="#7fb9e8" fill-opacity="0.09"/><rect x="65.23" y="0" width="4.08" height="4" fill="#78c4ee" fill-opacity="0.13"/><rect x="73.38" y="0" width="4.08" height="4" fill="#5cb8ea" fill-opacity="0.11"/><rect x="81.54" y="0" width="4.08" height="4" fill="#3da5e0" fill-opacity="0.20"/><rect x="89.69" y="0" width="4.08" height="4" fill="#78c4ee" fill-opacity="0.09"/><rect x="97.85" y="0" width="4.08" height="4" fill="#78c4ee" fill-opacity="0.18"/><rect x="101.92" y="0" width="4.08" height="4" fill="#3da5e0" fill-opacity="0.15"/><rect x="4.08" y="4" width="4.08" height="4" fill="#5fc6ee" fill-opacity="0.43"/><rect x="8.15" y="4" width="4.08" height="4" fill="#4aaee6" fill-opacity="0.29"/><rect x="12.23" y="4" width="4.08" height="4" fill="#3da5e0" fill-opacity="0.44"/><rect x="16.31" y="4" width="4.08" height="4" fill="#7fb9e8" fill-opacity="0.57"/><rect x="20.38" y="4" width="4.08" height="4" fill="#3da5e0" fill-opacity="0.26"/><rect x="28.54" y="4" width="4.08" height="4" fill="#78c4ee" fill-opacity="0.61"/><rect x="32.62" y="4" width="4.08" height="4" fill="#7fb9e8" fill-opacity="0.68"/><rect x="36.69" y="4" width="4.08" height="4" fill="#7fb9e8" fill-opacity="0.52"/><rect x="40.77" y="4" width="4.08" height="4" fill="#5cb8ea" fill-opacity="0.33"/><rect x="44.85" y="4" width="4.08" height="4" fill="#4aaee6" fill-opacity="0.59"/><rect x="48.92" y="4" width="4.08" height="4" fill="#78c4ee" fill-opacity="0.64"/><rect x="53.00" y="4" width="4.08" height="4" fill="#5fc6ee" fill-opacity="0.70"/><rect x="57.08" y="4" width="4.08" height="4" fill="#5cb8ea" fill-opacity="0.68"/><rect x="61.15" y="4" width="4.08" height="4" fill="#78c4ee" fill-opacity="0.57"/><rect x="65.23" y="4" width="4.08" height="4" fill="#5cb8ea" fill-opacity="0.37"/><rect x="69.31" y="4" width="4.08" height="4" fill="#5cb8ea" fill-opacity="0.39"/><rect x="73.38" y="4" width="4.08" height="4" fill="#78c4ee" fill-opacity="0.49"/><rect x="77.46" y="4" width="4.08" height="4" fill="#4aaee6" fill-opacity="0.33"/><rect x="81.54" y="4" width="4.08" height="4" fill="#7fb9e8" fill-opacity="0.49"/><rect x="93.77" y="4" width="4.08" height="4" fill="#5cb8ea" fill-opacity="0.23"/><rect x="97.85" y="4" width="4.08" height="4" fill="#5cb8ea" fill-opacity="0.46"/><rect x="0.00" y="8" width="4.08" height="4" fill="#5cb8ea" fill-opacity="0.53"/><rect x="4.08" y="8" width="4.08" height="4" fill="#3da5e0" fill-opacity="0.29"/><rect x="8.15" y="8" width="4.08" height="4" fill="#4aaee6" fill-opacity="0.41"/><rect x="12.23" y="8" width="4.08" height="4" fill="#5cb8ea" fill-opacity="0.45"/><rect x="16.31" y="8" width="4.08" height="4" fill="#5fc6ee" fill-opacity="0.20"/><rect x="20.38" y="8" width="4.08" height="4" fill="#3da5e0" fill-opacity="0.61"/><rect x="24.46" y="8" width="4.08" height="4" fill="#4aaee6" fill-opacity="0.24"/><rect x="28.54" y="8" width="4.08" height="4" fill="#78c4ee" fill-opacity="0.42"/><rect x="32.62" y="8" width="4.08" height="4" fill="#5cb8ea" fill-opacity="0.20"/><rect x="40.77" y="8" width="4.08" height="4" fill="#3da5e0" fill-opacity="0.35"/><rect x="44.85" y="8" width="4.08" height="4" fill="#5fc6ee" fill-opacity="0.55"/><rect x="48.92" y="8" width="4.08" height="4" fill="#78c4ee" fill-opacity="0.24"/><rect x="53.00" y="8" width="4.08" height="4" fill="#5fc6ee" fill-opacity="0.42"/><rect x="61.15" y="8" width="4.08" height="4" fill="#5fc6ee" fill-opacity="0.71"/><rect x="65.23" y="8" width="4.08" height="4" fill="#4aaee6" fill-opacity="0.62"/><rect x="69.31" y="8" width="4.08" height="4" fill="#7fb9e8" fill-opacity="0.37"/><rect x="73.38" y="8" width="4.08" height="4" fill="#78c4ee" fill-opacity="0.50"/><rect x="77.46" y="8" width="4.08" height="4" fill="#78c4ee" fill-opacity="0.54"/><rect x="81.54" y="8" width="4.08" height="4" fill="#7fb9e8" fill-opacity="0.48"/><rect x="85.62" y="8" width="4.08" height="4" fill="#7fb9e8" fill-opacity="0.30"/><rect x="89.69" y="8" width="4.08" height="4" fill="#5cb8ea" fill-opacity="0.56"/><rect x="93.77" y="8" width="4.08" height="4" fill="#5fc6ee" fill-opacity="0.39"/><rect x="101.92" y="8" width="4.08" height="4" fill="#3da5e0" fill-opacity="0.32"/><rect x="0.00" y="12" width="4.08" height="4" fill="#5cb8ea" fill-opacity="0.04"/><rect x="8.15" y="12" width="4.08" height="4" fill="#5cb8ea" fill-opacity="0.12"/><rect x="16.31" y="12" width="4.08" height="4" fill="#5fc6ee" fill-opacity="0.04"/><rect x="28.54" y="12" width="4.08" height="4" fill="#5fc6ee" fill-opacity="0.08"/><rect x="36.69" y="12" width="4.08" height="4" fill="#5fc6ee" fill-opacity="0.09"/><rect x="57.08" y="12" width="4.08" height="4" fill="#5fc6ee" fill-opacity="0.09"/><rect x="69.31" y="12" width="4.08" height="4" fill="#7fb9e8" fill-opacity="0.15"/><rect x="93.77" y="12" width="4.08" height="4" fill="#4aaee6" fill-opacity="0.09"/><rect x="97.85" y="12" width="4.08" height="4" fill="#4aaee6" fill-opacity="0.12"/><rect x="101.92" y="12" width="4.08" height="4" fill="#4aaee6" fill-opacity="0.04"/></svg>
<svg class="abs" style="left:352px;top:420px" width="79" height="16" shape-rendering="crispEdges"><rect x="0.00" y="0" width="3.95" height="4" fill="#888" fill-opacity="0.14"/><rect x="7.90" y="0" width="3.95" height="4" fill="#777" fill-opacity="0.06"/><rect x="31.60" y="0" width="3.95" height="4" fill="#999" fill-opacity="0.16"/><rect x="43.45" y="0" width="3.95" height="4" fill="#888" fill-opacity="0.08"/><rect x="47.40" y="0" width="3.95" height="4" fill="#999" fill-opacity="0.16"/><rect x="55.30" y="0" width="3.95" height="4" fill="#777" fill-opacity="0.14"/><rect x="59.25" y="0" width="3.95" height="4" fill="#9a9490" fill-opacity="0.09"/><rect x="63.20" y="0" width="3.95" height="4" fill="#7f8590" fill-opacity="0.19"/><rect x="67.15" y="0" width="3.95" height="4" fill="#7f8590" fill-opacity="0.10"/><rect x="71.10" y="0" width="3.95" height="4" fill="#9a9490" fill-opacity="0.17"/><rect x="75.05" y="0" width="3.95" height="4" fill="#8a8890" fill-opacity="0.17"/><rect x="0.00" y="4" width="3.95" height="4" fill="#888" fill-opacity="0.62"/><rect x="3.95" y="4" width="3.95" height="4" fill="#aaa" fill-opacity="0.68"/><rect x="7.90" y="4" width="3.95" height="4" fill="#888" fill-opacity="0.40"/><rect x="11.85" y="4" width="3.95" height="4" fill="#7f8590" fill-opacity="0.33"/><rect x="15.80" y="4" width="3.95" height="4" fill="#8a8890" fill-opacity="0.34"/><rect x="19.75" y="4" width="3.95" height="4" fill="#888" fill-opacity="0.38"/><rect x="23.70" y="4" width="3.95" height="4" fill="#777" fill-opacity="0.45"/><rect x="27.65" y="4" width="3.95" height="4" fill="#888" fill-opacity="0.22"/><rect x="31.60" y="4" width="3.95" height="4" fill="#9a9490" fill-opacity="0.54"/><rect x="35.55" y="4" width="3.95" height="4" fill="#888" fill-opacity="0.45"/><rect x="39.50" y="4" width="3.95" height="4" fill="#888" fill-opacity="0.43"/><rect x="43.45" y="4" width="3.95" height="4" fill="#777" fill-opacity="0.52"/><rect x="47.40" y="4" width="3.95" height="4" fill="#999" fill-opacity="0.47"/><rect x="51.35" y="4" width="3.95" height="4" fill="#777" fill-opacity="0.51"/><rect x="55.30" y="4" width="3.95" height="4" fill="#7f8590" fill-opacity="0.63"/><rect x="59.25" y="4" width="3.95" height="4" fill="#8a8890" fill-opacity="0.50"/><rect x="67.15" y="4" width="3.95" height="4" fill="#8a8890" fill-opacity="0.37"/><rect x="71.10" y="4" width="3.95" height="4" fill="#8a8890" fill-opacity="0.21"/><rect x="75.05" y="4" width="3.95" height="4" fill="#7f8590" fill-opacity="0.52"/><rect x="0.00" y="8" width="3.95" height="4" fill="#999" fill-opacity="0.55"/><rect x="3.95" y="8" width="3.95" height="4" fill="#999" fill-opacity="0.23"/><rect x="7.90" y="8" width="3.95" height="4" fill="#9a9490" fill-opacity="0.50"/><rect x="19.75" y="8" width="3.95" height="4" fill="#aaa" fill-opacity="0.49"/><rect x="23.70" y="8" width="3.95" height="4" fill="#8a8890" fill-opacity="0.30"/><rect x="27.65" y="8" width="3.95" height="4" fill="#999" fill-opacity="0.53"/><rect x="31.60" y="8" width="3.95" height="4" fill="#888" fill-opacity="0.61"/><rect x="35.55" y="8" width="3.95" height="4" fill="#7f8590" fill-opacity="0.69"/><rect x="39.50" y="8" width="3.95" height="4" fill="#999" fill-opacity="0.70"/><rect x="43.45" y="8" width="3.95" height="4" fill="#7f8590" fill-opacity="0.46"/><rect x="47.40" y="8" width="3.95" height="4" fill="#7f8590" fill-opacity="0.65"/><rect x="51.35" y="8" width="3.95" height="4" fill="#999" fill-opacity="0.23"/><rect x="55.30" y="8" width="3.95" height="4" fill="#aaa" fill-opacity="0.66"/><rect x="59.25" y="8" width="3.95" height="4" fill="#888" fill-opacity="0.39"/><rect x="63.20" y="8" width="3.95" height="4" fill="#888" fill-opacity="0.72"/><rect x="67.15" y="8" width="3.95" height="4" fill="#aaa" fill-opacity="0.20"/><rect x="71.10" y="8" width="3.95" height="4" fill="#8a8890" fill-opacity="0.41"/><rect x="75.05" y="8" width="3.95" height="4" fill="#888" fill-opacity="0.36"/><rect x="3.95" y="12" width="3.95" height="4" fill="#999" fill-opacity="0.12"/><rect x="19.75" y="12" width="3.95" height="4" fill="#9a9490" fill-opacity="0.14"/><rect x="31.60" y="12" width="3.95" height="4" fill="#8a8890" fill-opacity="0.07"/><rect x="35.55" y="12" width="3.95" height="4" fill="#8a8890" fill-opacity="0.12"/><rect x="51.35" y="12" width="3.95" height="4" fill="#999" fill-opacity="0.05"/><rect x="67.15" y="12" width="3.95" height="4" fill="#777" fill-opacity="0.03"/><rect x="71.10" y="12" width="3.95" height="4" fill="#9a9490" fill-opacity="0.05"/><rect x="75.05" y="12" width="3.95" height="4" fill="#777" fill-opacity="0.09"/></svg>
<svg class="abs" style="left:468px;top:420px" width="61" height="16" shape-rendering="crispEdges"><rect x="0.00" y="0" width="4.07" height="4" fill="#888" fill-opacity="0.16"/><rect x="8.13" y="0" width="4.07" height="4" fill="#9a9490" fill-opacity="0.17"/><rect x="12.20" y="0" width="4.07" height="4" fill="#888" fill-opacity="0.06"/><rect x="16.27" y="0" width="4.07" height="4" fill="#777" fill-opacity="0.14"/><rect x="28.47" y="0" width="4.07" height="4" fill="#7f8590" fill-opacity="0.09"/><rect x="32.53" y="0" width="4.07" height="4" fill="#9a9490" fill-opacity="0.12"/><rect x="40.67" y="0" width="4.07" height="4" fill="#8a8890" fill-opacity="0.05"/><rect x="48.80" y="0" width="4.07" height="4" fill="#aaa" fill-opacity="0.14"/><rect x="0.00" y="4" width="4.07" height="4" fill="#777" fill-opacity="0.44"/><rect x="4.07" y="4" width="4.07" height="4" fill="#7f8590" fill-opacity="0.36"/><rect x="12.20" y="4" width="4.07" height="4" fill="#7f8590" fill-opacity="0.52"/><rect x="16.27" y="4" width="4.07" height="4" fill="#777" fill-opacity="0.28"/><rect x="20.33" y="4" width="4.07" height="4" fill="#aaa" fill-opacity="0.27"/><rect x="24.40" y="4" width="4.07" height="4" fill="#999" fill-opacity="0.39"/><rect x="28.47" y="4" width="4.07" height="4" fill="#9a9490" fill-opacity="0.48"/><rect x="32.53" y="4" width="4.07" height="4" fill="#9a9490" fill-opacity="0.28"/><rect x="36.60" y="4" width="4.07" height="4" fill="#9a9490" fill-opacity="0.32"/><rect x="40.67" y="4" width="4.07" height="4" fill="#aaa" fill-opacity="0.57"/><rect x="44.73" y="4" width="4.07" height="4" fill="#7f8590" fill-opacity="0.54"/><rect x="48.80" y="4" width="4.07" height="4" fill="#8a8890" fill-opacity="0.71"/><rect x="52.87" y="4" width="4.07" height="4" fill="#9a9490" fill-opacity="0.39"/><rect x="0.00" y="8" width="4.07" height="4" fill="#8a8890" fill-opacity="0.20"/><rect x="4.07" y="8" width="4.07" height="4" fill="#999" fill-opacity="0.62"/><rect x="8.13" y="8" width="4.07" height="4" fill="#8a8890" fill-opacity="0.53"/><rect x="12.20" y="8" width="4.07" height="4" fill="#777" fill-opacity="0.25"/><rect x="16.27" y="8" width="4.07" height="4" fill="#9a9490" fill-opacity="0.26"/><rect x="20.33" y="8" width="4.07" height="4" fill="#888" fill-opacity="0.49"/><rect x="24.40" y="8" width="4.07" height="4" fill="#7f8590" fill-opacity="0.52"/><rect x="28.47" y="8" width="4.07" height="4" fill="#7f8590" fill-opacity="0.29"/><rect x="32.53" y="8" width="4.07" height="4" fill="#9a9490" fill-opacity="0.61"/><rect x="36.60" y="8" width="4.07" height="4" fill="#888" fill-opacity="0.60"/><rect x="40.67" y="8" width="4.07" height="4" fill="#888" fill-opacity="0.65"/><rect x="44.73" y="8" width="4.07" height="4" fill="#aaa" fill-opacity="0.38"/><rect x="48.80" y="8" width="4.07" height="4" fill="#aaa" fill-opacity="0.31"/><rect x="56.93" y="8" width="4.07" height="4" fill="#777" fill-opacity="0.58"/><rect x="12.20" y="12" width="4.07" height="4" fill="#8a8890" fill-opacity="0.06"/><rect x="16.27" y="12" width="4.07" height="4" fill="#7f8590" fill-opacity="0.14"/><rect x="24.40" y="12" width="4.07" height="4" fill="#999" fill-opacity="0.06"/><rect x="32.53" y="12" width="4.07" height="4" fill="#999" fill-opacity="0.07"/><rect x="44.73" y="12" width="4.07" height="4" fill="#888" fill-opacity="0.15"/></svg>
<svg class="abs" style="left:575px;top:420px" width="55" height="16" shape-rendering="crispEdges"><rect x="11.79" y="0" width="3.93" height="4" fill="#777" fill-opacity="0.09"/><rect x="15.71" y="0" width="3.93" height="4" fill="#888" fill-opacity="0.12"/><rect x="19.64" y="0" width="3.93" height="4" fill="#9a9490" fill-opacity="0.15"/><rect x="27.50" y="0" width="3.93" height="4" fill="#aaa" fill-opacity="0.05"/><rect x="31.43" y="0" width="3.93" height="4" fill="#999" fill-opacity="0.18"/><rect x="35.36" y="0" width="3.93" height="4" fill="#8a8890" fill-opacity="0.16"/><rect x="39.29" y="0" width="3.93" height="4" fill="#999" fill-opacity="0.18"/><rect x="51.07" y="0" width="3.93" height="4" fill="#888" fill-opacity="0.19"/><rect x="3.93" y="4" width="3.93" height="4" fill="#777" fill-opacity="0.58"/><rect x="7.86" y="4" width="3.93" height="4" fill="#8a8890" fill-opacity="0.44"/><rect x="11.79" y="4" width="3.93" height="4" fill="#7f8590" fill-opacity="0.38"/><rect x="15.71" y="4" width="3.93" height="4" fill="#777" fill-opacity="0.66"/><rect x="19.64" y="4" width="3.93" height="4" fill="#7f8590" fill-opacity="0.30"/><rect x="23.57" y="4" width="3.93" height="4" fill="#9a9490" fill-opacity="0.22"/><rect x="27.50" y="4" width="3.93" height="4" fill="#7f8590" fill-opacity="0.50"/><rect x="31.43" y="4" width="3.93" height="4" fill="#999" fill-opacity="0.21"/><rect x="35.36" y="4" width="3.93" height="4" fill="#8a8890" fill-opacity="0.26"/><rect x="43.21" y="4" width="3.93" height="4" fill="#888" fill-opacity="0.20"/><rect x="47.14" y="4" width="3.93" height="4" fill="#7f8590" fill-opacity="0.28"/><rect x="51.07" y="4" width="3.93" height="4" fill="#9a9490" fill-opacity="0.72"/><rect x="0.00" y="8" width="3.93" height="4" fill="#777" fill-opacity="0.46"/><rect x="3.93" y="8" width="3.93" height="4" fill="#888" fill-opacity="0.31"/><rect x="7.86" y="8" width="3.93" height="4" fill="#888" fill-opacity="0.34"/><rect x="11.79" y="8" width="3.93" height="4" fill="#777" fill-opacity="0.34"/><rect x="15.71" y="8" width="3.93" height="4" fill="#aaa" fill-opacity="0.22"/><rect x="19.64" y="8" width="3.93" height="4" fill="#777" fill-opacity="0.39"/><rect x="23.57" y="8" width="3.93" height="4" fill="#8a8890" fill-opacity="0.22"/><rect x="27.50" y="8" width="3.93" height="4" fill="#7f8590" fill-opacity="0.49"/><rect x="31.43" y="8" width="3.93" height="4" fill="#7f8590" fill-opacity="0.72"/><rect x="35.36" y="8" width="3.93" height="4" fill="#999" fill-opacity="0.41"/><rect x="39.29" y="8" width="3.93" height="4" fill="#888" fill-opacity="0.40"/><rect x="43.21" y="8" width="3.93" height="4" fill="#8a8890" fill-opacity="0.40"/><rect x="47.14" y="8" width="3.93" height="4" fill="#7f8590" fill-opacity="0.67"/><rect x="51.07" y="8" width="3.93" height="4" fill="#999" fill-opacity="0.52"/><rect x="19.64" y="12" width="3.93" height="4" fill="#777" fill-opacity="0.10"/><rect x="27.50" y="12" width="3.93" height="4" fill="#999" fill-opacity="0.11"/><rect x="35.36" y="12" width="3.93" height="4" fill="#8a8890" fill-opacity="0.11"/><rect x="43.21" y="12" width="3.93" height="4" fill="#aaa" fill-opacity="0.12"/><rect x="51.07" y="12" width="3.93" height="4" fill="#8a8890" fill-opacity="0.10"/></svg>
<svg class="abs" style="left:230px;top:462px" width="104" height="16" shape-rendering="crispEdges"><rect x="0.00" y="0" width="4.00" height="4" fill="#7fb9e8" fill-opacity="0.14"/><rect x="8.00" y="0" width="4.00" height="4" fill="#5fc6ee" fill-opacity="0.05"/><rect x="12.00" y="0" width="4.00" height="4" fill="#78c4ee" fill-opacity="0.15"/><rect x="16.00" y="0" width="4.00" height="4" fill="#7fb9e8" fill-opacity="0.17"/><rect x="20.00" y="0" width="4.00" height="4" fill="#78c4ee" fill-opacity="0.14"/><rect x="24.00" y="0" width="4.00" height="4" fill="#7fb9e8" fill-opacity="0.17"/><rect x="28.00" y="0" width="4.00" height="4" fill="#5fc6ee" fill-opacity="0.13"/><rect x="32.00" y="0" width="4.00" height="4" fill="#5fc6ee" fill-opacity="0.06"/><rect x="36.00" y="0" width="4.00" height="4" fill="#5cb8ea" fill-opacity="0.07"/><rect x="44.00" y="0" width="4.00" height="4" fill="#7fb9e8" fill-opacity="0.07"/><rect x="68.00" y="0" width="4.00" height="4" fill="#3da5e0" fill-opacity="0.10"/><rect x="72.00" y="0" width="4.00" height="4" fill="#78c4ee" fill-opacity="0.06"/><rect x="76.00" y="0" width="4.00" height="4" fill="#7fb9e8" fill-opacity="0.10"/><rect x="92.00" y="0" width="4.00" height="4" fill="#3da5e0" fill-opacity="0.10"/><rect x="100.00" y="0" width="4.00" height="4" fill="#5cb8ea" fill-opacity="0.12"/><rect x="0.00" y="4" width="4.00" height="4" fill="#7fb9e8" fill-opacity="0.28"/><rect x="4.00" y="4" width="4.00" height="4" fill="#7fb9e8" fill-opacity="0.45"/><rect x="8.00" y="4" width="4.00" height="4" fill="#78c4ee" fill-opacity="0.39"/><rect x="12.00" y="4" width="4.00" height="4" fill="#5fc6ee" fill-opacity="0.33"/><rect x="16.00" y="4" width="4.00" height="4" fill="#4aaee6" fill-opacity="0.50"/><rect x="20.00" y="4" width="4.00" height="4" fill="#5fc6ee" fill-opacity="0.36"/><rect x="24.00" y="4" width="4.00" height="4" fill="#5cb8ea" fill-opacity="0.37"/><rect x="28.00" y="4" width="4.00" height="4" fill="#5fc6ee" fill-opacity="0.43"/><rect x="32.00" y="4" width="4.00" height="4" fill="#5cb8ea" fill-opacity="0.65"/><rect x="36.00" y="4" width="4.00" height="4" fill="#78c4ee" fill-opacity="0.70"/><rect x="40.00" y="4" width="4.00" height="4" fill="#4aaee6" fill-opacity="0.39"/><rect x="44.00" y="4" width="4.00" height="4" fill="#4aaee6" fill-opacity="0.40"/><rect x="48.00" y="4" width="4.00" height="4" fill="#3da5e0" fill-opacity="0.35"/><rect x="52.00" y="4" width="4.00" height="4" fill="#78c4ee" fill-opacity="0.52"/><rect x="56.00" y="4" width="4.00" height="4" fill="#5fc6ee" fill-opacity="0.40"/><rect x="60.00" y="4" width="4.00" height="4" fill="#7fb9e8" fill-opacity="0.52"/><rect x="64.00" y="4" width="4.00" height="4" fill="#5cb8ea" fill-opacity="0.23"/><rect x="68.00" y="4" width="4.00" height="4" fill="#3da5e0" fill-opacity="0.24"/><rect x="72.00" y="4" width="4.00" height="4" fill="#3da5e0" fill-opacity="0.47"/><rect x="80.00" y="4" width="4.00" height="4" fill="#4aaee6" fill-opacity="0.61"/><rect x="84.00" y="4" width="4.00" height="4" fill="#3da5e0" fill-opacity="0.44"/><rect x="88.00" y="4" width="4.00" height="4" fill="#3da5e0" fill-opacity="0.43"/><rect x="92.00" y="4" width="4.00" height="4" fill="#3da5e0" fill-opacity="0.23"/><rect x="96.00" y="4" width="4.00" height="4" fill="#4aaee6" fill-opacity="0.47"/><rect x="100.00" y="4" width="4.00" height="4" fill="#3da5e0" fill-opacity="0.59"/><rect x="0.00" y="8" width="4.00" height="4" fill="#78c4ee" fill-opacity="0.68"/><rect x="4.00" y="8" width="4.00" height="4" fill="#3da5e0" fill-opacity="0.60"/><rect x="8.00" y="8" width="4.00" height="4" fill="#4aaee6" fill-opacity="0.31"/><rect x="12.00" y="8" width="4.00" height="4" fill="#3da5e0" fill-opacity="0.21"/><rect x="16.00" y="8" width="4.00" height="4" fill="#5fc6ee" fill-opacity="0.59"/><rect x="20.00" y="8" width="4.00" height="4" fill="#5cb8ea" fill-opacity="0.63"/><rect x="24.00" y="8" width="4.00" height="4" fill="#4aaee6" fill-opacity="0.45"/><rect x="28.00" y="8" width="4.00" height="4" fill="#5fc6ee" fill-opacity="0.59"/><rect x="32.00" y="8" width="4.00" height="4" fill="#4aaee6" fill-opacity="0.41"/><rect x="36.00" y="8" width="4.00" height="4" fill="#78c4ee" fill-opacity="0.28"/><rect x="40.00" y="8" width="4.00" height="4" fill="#5cb8ea" fill-opacity="0.71"/><rect x="48.00" y="8" width="4.00" height="4" fill="#78c4ee" fill-opacity="0.34"/><rect x="52.00" y="8" width="4.00" height="4" fill="#78c4ee" fill-opacity="0.55"/><rect x="56.00" y="8" width="4.00" height="4" fill="#3da5e0" fill-opacity="0.47"/><rect x="60.00" y="8" width="4.00" height="4" fill="#5cb8ea" fill-opacity="0.36"/><rect x="64.00" y="8" width="4.00" height="4" fill="#5fc6ee" fill-opacity="0.62"/><rect x="68.00" y="8" width="4.00" height="4" fill="#4aaee6" fill-opacity="0.31"/><rect x="72.00" y="8" width="4.00" height="4" fill="#3da5e0" fill-opacity="0.54"/><rect x="76.00" y="8" width="4.00" height="4" fill="#5cb8ea" fill-opacity="0.57"/><rect x="80.00" y="8" width="4.00" height="4" fill="#5cb8ea" fill-opacity="0.62"/><rect x="84.00" y="8" width="4.00" height="4" fill="#7fb9e8" fill-opacity="0.57"/><rect x="88.00" y="8" width="4.00" height="4" fill="#5fc6ee" fill-opacity="0.36"/><rect x="92.00" y="8" width="4.00" height="4" fill="#78c4ee" fill-opacity="0.69"/><rect x="96.00" y="8" width="4.00" height="4" fill="#3da5e0" fill-opacity="0.31"/><rect x="100.00" y="8" width="4.00" height="4" fill="#5fc6ee" fill-opacity="0.57"/><rect x="4.00" y="12" width="4.00" height="4" fill="#5cb8ea" fill-opacity="0.12"/><rect x="12.00" y="12" width="4.00" height="4" fill="#7fb9e8" fill-opacity="0.08"/><rect x="16.00" y="12" width="4.00" height="4" fill="#4aaee6" fill-opacity="0.05"/><rect x="28.00" y="12" width="4.00" height="4" fill="#7fb9e8" fill-opacity="0.12"/><rect x="48.00" y="12" width="4.00" height="4" fill="#5cb8ea" fill-opacity="0.06"/><rect x="52.00" y="12" width="4.00" height="4" fill="#5cb8ea" fill-opacity="0.14"/><rect x="64.00" y="12" width="4.00" height="4" fill="#4aaee6" fill-opacity="0.04"/><rect x="68.00" y="12" width="4.00" height="4" fill="#78c4ee" fill-opacity="0.11"/><rect x="76.00" y="12" width="4.00" height="4" fill="#4aaee6" fill-opacity="0.08"/><rect x="84.00" y="12" width="4.00" height="4" fill="#3da5e0" fill-opacity="0.05"/><rect x="88.00" y="12" width="4.00" height="4" fill="#5fc6ee" fill-opacity="0.06"/></svg>
<svg class="abs" style="left:352px;top:462px" width="79" height="16" shape-rendering="crispEdges"><rect x="0.00" y="0" width="3.95" height="4" fill="#9a9490" fill-opacity="0.08"/><rect x="7.90" y="0" width="3.95" height="4" fill="#888" fill-opacity="0.17"/><rect x="11.85" y="0" width="3.95" height="4" fill="#8a8890" fill-opacity="0.05"/><rect x="15.80" y="0" width="3.95" height="4" fill="#7f8590" fill-opacity="0.09"/><rect x="23.70" y="0" width="3.95" height="4" fill="#7f8590" fill-opacity="0.11"/><rect x="27.65" y="0" width="3.95" height="4" fill="#8a8890" fill-opacity="0.09"/><rect x="31.60" y="0" width="3.95" height="4" fill="#777" fill-opacity="0.17"/><rect x="39.50" y="0" width="3.95" height="4" fill="#9a9490" fill-opacity="0.14"/><rect x="47.40" y="0" width="3.95" height="4" fill="#aaa" fill-opacity="0.10"/><rect x="63.20" y="0" width="3.95" height="4" fill="#999" fill-opacity="0.08"/><rect x="75.05" y="0" width="3.95" height="4" fill="#999" fill-opacity="0.06"/><rect x="0.00" y="4" width="3.95" height="4" fill="#888" fill-opacity="0.60"/><rect x="3.95" y="4" width="3.95" height="4" fill="#9a9490" fill-opacity="0.36"/><rect x="7.90" y="4" width="3.95" height="4" fill="#999" fill-opacity="0.70"/><rect x="11.85" y="4" width="3.95" height="4" fill="#999" fill-opacity="0.28"/><rect x="15.80" y="4" width="3.95" height="4" fill="#8a8890" fill-opacity="0.37"/><rect x="19.75" y="4" width="3.95" height="4" fill="#999" fill-opacity="0.37"/><rect x="23.70" y="4" width="3.95" height="4" fill="#999" fill-opacity="0.61"/><rect x="27.65" y="4" width="3.95" height="4" fill="#8a8890" fill-opacity="0.58"/><rect x="31.60" y="4" width="3.95" height="4" fill="#aaa" fill-opacity="0.49"/><rect x="35.55" y="4" width="3.95" height="4" fill="#777" fill-opacity="0.40"/><rect x="39.50" y="4" width="3.95" height="4" fill="#777" fill-opacity="0.47"/><rect x="43.45" y="4" width="3.95" height="4" fill="#8a8890" fill-opacity="0.56"/><rect x="47.40" y="4" width="3.95" height="4" fill="#999" fill-opacity="0.38"/><rect x="51.35" y="4" width="3.95" height="4" fill="#999" fill-opacity="0.58"/><rect x="55.30" y="4" width="3.95" height="4" fill="#999" fill-opacity="0.69"/><rect x="59.25" y="4" width="3.95" height="4" fill="#aaa" fill-opacity="0.54"/><rect x="63.20" y="4" width="3.95" height="4" fill="#777" fill-opacity="0.28"/><rect x="67.15" y="4" width="3.95" height="4" fill="#888" fill-opacity="0.32"/><rect x="71.10" y="4" width="3.95" height="4" fill="#777" fill-opacity="0.48"/><rect x="75.05" y="4" width="3.95" height="4" fill="#9a9490" fill-opacity="0.33"/><rect x="0.00" y="8" width="3.95" height="4" fill="#999" fill-opacity="0.46"/><rect x="7.90" y="8" width="3.95" height="4" fill="#888" fill-opacity="0.49"/><rect x="15.80" y="8" width="3.95" height="4" fill="#888" fill-opacity="0.48"/><rect x="19.75" y="8" width="3.95" height="4" fill="#777" fill-opacity="0.21"/><rect x="23.70" y="8" width="3.95" height="4" fill="#9a9490" fill-opacity="0.61"/><rect x="27.65" y="8" width="3.95" height="4" fill="#777" fill-opacity="0.59"/><rect x="31.60" y="8" width="3.95" height="4" fill="#999" fill-opacity="0.28"/><rect x="39.50" y="8" width="3.95" height="4" fill="#777" fill-opacity="0.52"/><rect x="43.45" y="8" width="3.95" height="4" fill="#777" fill-opacity="0.66"/><rect x="47.40" y="8" width="3.95" height="4" fill="#888" fill-opacity="0.31"/><rect x="51.35" y="8" width="3.95" height="4" fill="#7f8590" fill-opacity="0.61"/><rect x="55.30" y="8" width="3.95" height="4" fill="#777" fill-opacity="0.63"/><rect x="59.25" y="8" width="3.95" height="4" fill="#777" fill-opacity="0.71"/><rect x="63.20" y="8" width="3.95" height="4" fill="#888" fill-opacity="0.60"/><rect x="67.15" y="8" width="3.95" height="4" fill="#aaa" fill-opacity="0.38"/><rect x="71.10" y="8" width="3.95" height="4" fill="#888" fill-opacity="0.51"/><rect x="75.05" y="8" width="3.95" height="4" fill="#8a8890" fill-opacity="0.69"/><rect x="3.95" y="12" width="3.95" height="4" fill="#888" fill-opacity="0.12"/><rect x="15.80" y="12" width="3.95" height="4" fill="#888" fill-opacity="0.07"/><rect x="19.75" y="12" width="3.95" height="4" fill="#7f8590" fill-opacity="0.14"/><rect x="23.70" y="12" width="3.95" height="4" fill="#777" fill-opacity="0.15"/><rect x="55.30" y="12" width="3.95" height="4" fill="#aaa" fill-opacity="0.11"/><rect x="59.25" y="12" width="3.95" height="4" fill="#7f8590" fill-opacity="0.08"/><rect x="67.15" y="12" width="3.95" height="4" fill="#8a8890" fill-opacity="0.05"/></svg>
<svg class="abs" style="left:465px;top:462px" width="65" height="16" shape-rendering="crispEdges"><rect x="0.00" y="0" width="4.06" height="4" fill="#999" fill-opacity="0.17"/><rect x="24.38" y="0" width="4.06" height="4" fill="#aaa" fill-opacity="0.17"/><rect x="52.81" y="0" width="4.06" height="4" fill="#aaa" fill-opacity="0.17"/><rect x="56.88" y="0" width="4.06" height="4" fill="#888" fill-opacity="0.17"/><rect x="60.94" y="0" width="4.06" height="4" fill="#9a9490" fill-opacity="0.13"/><rect x="0.00" y="4" width="4.06" height="4" fill="#7f8590" fill-opacity="0.46"/><rect x="4.06" y="4" width="4.06" height="4" fill="#7f8590" fill-opacity="0.23"/><rect x="8.12" y="4" width="4.06" height="4" fill="#7f8590" fill-opacity="0.61"/><rect x="12.19" y="4" width="4.06" height="4" fill="#8a8890" fill-opacity="0.38"/><rect x="16.25" y="4" width="4.06" height="4" fill="#7f8590" fill-opacity="0.25"/><rect x="20.31" y="4" width="4.06" height="4" fill="#7f8590" fill-opacity="0.61"/><rect x="24.38" y="4" width="4.06" height="4" fill="#aaa" fill-opacity="0.63"/><rect x="28.44" y="4" width="4.06" height="4" fill="#9a9490" fill-opacity="0.36"/><rect x="32.50" y="4" width="4.06" height="4" fill="#aaa" fill-opacity="0.26"/><rect x="36.56" y="4" width="4.06" height="4" fill="#999" fill-opacity="0.41"/><rect x="40.62" y="4" width="4.06" height="4" fill="#888" fill-opacity="0.37"/><rect x="44.69" y="4" width="4.06" height="4" fill="#8a8890" fill-opacity="0.40"/><rect x="48.75" y="4" width="4.06" height="4" fill="#777" fill-opacity="0.35"/><rect x="56.88" y="4" width="4.06" height="4" fill="#8a8890" fill-opacity="0.66"/><rect x="60.94" y="4" width="4.06" height="4" fill="#777" fill-opacity="0.62"/><rect x="0.00" y="8" width="4.06" height="4" fill="#8a8890" fill-opacity="0.53"/><rect x="4.06" y="8" width="4.06" height="4" fill="#999" fill-opacity="0.30"/><rect x="8.12" y="8" width="4.06" height="4" fill="#888" fill-opacity="0.28"/><rect x="12.19" y="8" width="4.06" height="4" fill="#9a9490" fill-opacity="0.66"/><rect x="16.25" y="8" width="4.06" height="4" fill="#999" fill-opacity="0.70"/><rect x="20.31" y="8" width="4.06" height="4" fill="#9a9490" fill-opacity="0.70"/><rect x="24.38" y="8" width="4.06" height="4" fill="#aaa" fill-opacity="0.52"/><rect x="28.44" y="8" width="4.06" height="4" fill="#9a9490" fill-opacity="0.28"/><rect x="32.50" y="8" width="4.06" height="4" fill="#777" fill-opacity="0.64"/><rect x="40.62" y="8" width="4.06" height="4" fill="#999" fill-opacity="0.62"/><rect x="44.69" y="8" width="4.06" height="4" fill="#9a9490" fill-opacity="0.55"/><rect x="48.75" y="8" width="4.06" height="4" fill="#7f8590" fill-opacity="0.59"/><rect x="52.81" y="8" width="4.06" height="4" fill="#999" fill-opacity="0.68"/><rect x="56.88" y="8" width="4.06" height="4" fill="#9a9490" fill-opacity="0.24"/><rect x="60.94" y="8" width="4.06" height="4" fill="#999" fill-opacity="0.34"/><rect x="0.00" y="12" width="4.06" height="4" fill="#7f8590" fill-opacity="0.11"/><rect x="16.25" y="12" width="4.06" height="4" fill="#8a8890" fill-opacity="0.11"/><rect x="20.31" y="12" width="4.06" height="4" fill="#777" fill-opacity="0.15"/><rect x="32.50" y="12" width="4.06" height="4" fill="#999" fill-opacity="0.08"/><rect x="52.81" y="12" width="4.06" height="4" fill="#888" fill-opacity="0.07"/><rect x="56.88" y="12" width="4.06" height="4" fill="#999" fill-opacity="0.14"/><rect x="60.94" y="12" width="4.06" height="4" fill="#9a9490" fill-opacity="0.10"/></svg>
<svg class="abs" style="left:572px;top:447px" width="58" height="16" shape-rendering="crispEdges"><rect x="8.29" y="0" width="4.14" height="4" fill="#999" fill-opacity="0.13"/><rect x="16.57" y="0" width="4.14" height="4" fill="#777" fill-opacity="0.16"/><rect x="20.71" y="0" width="4.14" height="4" fill="#7f8590" fill-opacity="0.20"/><rect x="24.86" y="0" width="4.14" height="4" fill="#7f8590" fill-opacity="0.19"/><rect x="29.00" y="0" width="4.14" height="4" fill="#7f8590" fill-opacity="0.19"/><rect x="33.14" y="0" width="4.14" height="4" fill="#999" fill-opacity="0.18"/><rect x="37.29" y="0" width="4.14" height="4" fill="#aaa" fill-opacity="0.13"/><rect x="41.43" y="0" width="4.14" height="4" fill="#888" fill-opacity="0.13"/><rect x="45.57" y="0" width="4.14" height="4" fill="#777" fill-opacity="0.17"/><rect x="49.71" y="0" width="4.14" height="4" fill="#888" fill-opacity="0.16"/><rect x="4.14" y="4" width="4.14" height="4" fill="#aaa" fill-opacity="0.71"/><rect x="16.57" y="4" width="4.14" height="4" fill="#8a8890" fill-opacity="0.36"/><rect x="20.71" y="4" width="4.14" height="4" fill="#8a8890" fill-opacity="0.37"/><rect x="24.86" y="4" width="4.14" height="4" fill="#999" fill-opacity="0.55"/><rect x="29.00" y="4" width="4.14" height="4" fill="#8a8890" fill-opacity="0.40"/><rect x="33.14" y="4" width="4.14" height="4" fill="#9a9490" fill-opacity="0.31"/><rect x="37.29" y="4" width="4.14" height="4" fill="#7f8590" fill-opacity="0.64"/><rect x="41.43" y="4" width="4.14" height="4" fill="#777" fill-opacity="0.66"/><rect x="45.57" y="4" width="4.14" height="4" fill="#8a8890" fill-opacity="0.59"/><rect x="49.71" y="4" width="4.14" height="4" fill="#8a8890" fill-opacity="0.64"/><rect x="53.86" y="4" width="4.14" height="4" fill="#999" fill-opacity="0.34"/><rect x="0.00" y="8" width="4.14" height="4" fill="#aaa" fill-opacity="0.41"/><rect x="4.14" y="8" width="4.14" height="4" fill="#999" fill-opacity="0.53"/><rect x="8.29" y="8" width="4.14" height="4" fill="#9a9490" fill-opacity="0.21"/><rect x="12.43" y="8" width="4.14" height="4" fill="#999" fill-opacity="0.49"/><rect x="16.57" y="8" width="4.14" height="4" fill="#888" fill-opacity="0.39"/><rect x="20.71" y="8" width="4.14" height="4" fill="#777" fill-opacity="0.66"/><rect x="24.86" y="8" width="4.14" height="4" fill="#8a8890" fill-opacity="0.55"/><rect x="29.00" y="8" width="4.14" height="4" fill="#999" fill-opacity="0.57"/><rect x="33.14" y="8" width="4.14" height="4" fill="#7f8590" fill-opacity="0.29"/><rect x="37.29" y="8" width="4.14" height="4" fill="#aaa" fill-opacity="0.56"/><rect x="41.43" y="8" width="4.14" height="4" fill="#aaa" fill-opacity="0.64"/><rect x="45.57" y="8" width="4.14" height="4" fill="#8a8890" fill-opacity="0.38"/><rect x="49.71" y="8" width="4.14" height="4" fill="#aaa" fill-opacity="0.38"/><rect x="53.86" y="8" width="4.14" height="4" fill="#9a9490" fill-opacity="0.65"/><rect x="4.14" y="12" width="4.14" height="4" fill="#999" fill-opacity="0.14"/><rect x="8.29" y="12" width="4.14" height="4" fill="#777" fill-opacity="0.07"/><rect x="16.57" y="12" width="4.14" height="4" fill="#9a9490" fill-opacity="0.03"/><rect x="29.00" y="12" width="4.14" height="4" fill="#999" fill-opacity="0.10"/><rect x="45.57" y="12" width="4.14" height="4" fill="#aaa" fill-opacity="0.06"/></svg>
<svg class="abs" style="left:572px;top:463px" width="58" height="16" shape-rendering="crispEdges"><rect x="24.86" y="0" width="4.14" height="4" fill="#7f8590" fill-opacity="0.15"/><rect x="29.00" y="0" width="4.14" height="4" fill="#7f8590" fill-opacity="0.18"/><rect x="33.14" y="0" width="4.14" height="4" fill="#aaa" fill-opacity="0.14"/><rect x="49.71" y="0" width="4.14" height="4" fill="#9a9490" fill-opacity="0.10"/><rect x="0.00" y="4" width="4.14" height="4" fill="#7f8590" fill-opacity="0.39"/><rect x="4.14" y="4" width="4.14" height="4" fill="#999" fill-opacity="0.26"/><rect x="8.29" y="4" width="4.14" height="4" fill="#aaa" fill-opacity="0.44"/><rect x="12.43" y="4" width="4.14" height="4" fill="#777" fill-opacity="0.34"/><rect x="20.71" y="4" width="4.14" height="4" fill="#777" fill-opacity="0.51"/><rect x="24.86" y="4" width="4.14" height="4" fill="#777" fill-opacity="0.63"/><rect x="29.00" y="4" width="4.14" height="4" fill="#999" fill-opacity="0.35"/><rect x="37.29" y="4" width="4.14" height="4" fill="#9a9490" fill-opacity="0.32"/><rect x="41.43" y="4" width="4.14" height="4" fill="#aaa" fill-opacity="0.31"/><rect x="49.71" y="4" width="4.14" height="4" fill="#888" fill-opacity="0.57"/><rect x="53.86" y="4" width="4.14" height="4" fill="#9a9490" fill-opacity="0.21"/><rect x="0.00" y="8" width="4.14" height="4" fill="#7f8590" fill-opacity="0.39"/><rect x="4.14" y="8" width="4.14" height="4" fill="#777" fill-opacity="0.25"/><rect x="8.29" y="8" width="4.14" height="4" fill="#9a9490" fill-opacity="0.47"/><rect x="12.43" y="8" width="4.14" height="4" fill="#777" fill-opacity="0.55"/><rect x="16.57" y="8" width="4.14" height="4" fill="#999" fill-opacity="0.70"/><rect x="20.71" y="8" width="4.14" height="4" fill="#7f8590" fill-opacity="0.33"/><rect x="24.86" y="8" width="4.14" height="4" fill="#8a8890" fill-opacity="0.27"/><rect x="33.14" y="8" width="4.14" height="4" fill="#888" fill-opacity="0.52"/><rect x="37.29" y="8" width="4.14" height="4" fill="#8a8890" fill-opacity="0.30"/><rect x="41.43" y="8" width="4.14" height="4" fill="#777" fill-opacity="0.59"/><rect x="45.57" y="8" width="4.14" height="4" fill="#8a8890" fill-opacity="0.47"/><rect x="49.71" y="8" width="4.14" height="4" fill="#7f8590" fill-opacity="0.61"/><rect x="53.86" y="8" width="4.14" height="4" fill="#9a9490" fill-opacity="0.34"/><rect x="8.29" y="12" width="4.14" height="4" fill="#777" fill-opacity="0.12"/><rect x="24.86" y="12" width="4.14" height="4" fill="#777" fill-opacity="0.05"/></svg>
<svg class="abs" style="left:572px;top:479px" width="18" height="16" shape-rendering="crispEdges"><rect x="0.00" y="0" width="4.50" height="4" fill="#777" fill-opacity="0.10"/><rect x="4.50" y="0" width="4.50" height="4" fill="#999" fill-opacity="0.07"/><rect x="9.00" y="0" width="4.50" height="4" fill="#7f8590" fill-opacity="0.04"/><rect x="0.00" y="4" width="4.50" height="4" fill="#888" fill-opacity="0.26"/><rect x="4.50" y="4" width="4.50" height="4" fill="#8a8890" fill-opacity="0.66"/><rect x="0.00" y="8" width="4.50" height="4" fill="#aaa" fill-opacity="0.45"/><rect x="9.00" y="8" width="4.50" height="4" fill="#999" fill-opacity="0.47"/><rect x="13.50" y="8" width="4.50" height="4" fill="#999" fill-opacity="0.31"/><rect x="9.00" y="12" width="4.50" height="4" fill="#aaa" fill-opacity="0.06"/></svg>
<svg class="abs" style="left:232px;top:511px" width="104" height="16" shape-rendering="crispEdges"><rect x="0.00" y="0" width="4.00" height="4" fill="#3da5e0" fill-opacity="0.16"/><rect x="4.00" y="0" width="4.00" height="4" fill="#3da5e0" fill-opacity="0.18"/><rect x="8.00" y="0" width="4.00" height="4" fill="#5cb8ea" fill-opacity="0.04"/><rect x="20.00" y="0" width="4.00" height="4" fill="#4aaee6" fill-opacity="0.17"/><rect x="28.00" y="0" width="4.00" height="4" fill="#5fc6ee" fill-opacity="0.18"/><rect x="40.00" y="0" width="4.00" height="4" fill="#3da5e0" fill-opacity="0.13"/><rect x="52.00" y="0" width="4.00" height="4" fill="#78c4ee" fill-opacity="0.08"/><rect x="56.00" y="0" width="4.00" height="4" fill="#5fc6ee" fill-opacity="0.06"/><rect x="68.00" y="0" width="4.00" height="4" fill="#7fb9e8" fill-opacity="0.13"/><rect x="96.00" y="0" width="4.00" height="4" fill="#7fb9e8" fill-opacity="0.14"/><rect x="0.00" y="4" width="4.00" height="4" fill="#3da5e0" fill-opacity="0.44"/><rect x="4.00" y="4" width="4.00" height="4" fill="#3da5e0" fill-opacity="0.26"/><rect x="8.00" y="4" width="4.00" height="4" fill="#5cb8ea" fill-opacity="0.23"/><rect x="12.00" y="4" width="4.00" height="4" fill="#4aaee6" fill-opacity="0.66"/><rect x="16.00" y="4" width="4.00" height="4" fill="#5cb8ea" fill-opacity="0.61"/><rect x="20.00" y="4" width="4.00" height="4" fill="#4aaee6" fill-opacity="0.59"/><rect x="24.00" y="4" width="4.00" height="4" fill="#5cb8ea" fill-opacity="0.67"/><rect x="28.00" y="4" width="4.00" height="4" fill="#4aaee6" fill-opacity="0.22"/><rect x="32.00" y="4" width="4.00" height="4" fill="#5cb8ea" fill-opacity="0.69"/><rect x="36.00" y="4" width="4.00" height="4" fill="#5fc6ee" fill-opacity="0.22"/><rect x="40.00" y="4" width="4.00" height="4" fill="#78c4ee" fill-opacity="0.68"/><rect x="44.00" y="4" width="4.00" height="4" fill="#3da5e0" fill-opacity="0.44"/><rect x="48.00" y="4" width="4.00" height="4" fill="#7fb9e8" fill-opacity="0.25"/><rect x="52.00" y="4" width="4.00" height="4" fill="#5fc6ee" fill-opacity="0.27"/><rect x="56.00" y="4" width="4.00" height="4" fill="#4aaee6" fill-opacity="0.47"/><rect x="60.00" y="4" width="4.00" height="4" fill="#3da5e0" fill-opacity="0.70"/><rect x="68.00" y="4" width="4.00" height="4" fill="#5fc6ee" fill-opacity="0.64"/><rect x="72.00" y="4" width="4.00" height="4" fill="#5fc6ee" fill-opacity="0.24"/><rect x="76.00" y="4" width="4.00" height="4" fill="#5fc6ee" fill-opacity="0.51"/><rect x="80.00" y="4" width="4.00" height="4" fill="#5fc6ee" fill-opacity="0.23"/><rect x="84.00" y="4" width="4.00" height="4" fill="#7fb9e8" fill-opacity="0.44"/><rect x="88.00" y="4" width="4.00" height="4" fill="#4aaee6" fill-opacity="0.59"/><rect x="92.00" y="4" width="4.00" height="4" fill="#3da5e0" fill-opacity="0.46"/><rect x="96.00" y="4" width="4.00" height="4" fill="#7fb9e8" fill-opacity="0.57"/><rect x="100.00" y="4" width="4.00" height="4" fill="#4aaee6" fill-opacity="0.42"/><rect x="0.00" y="8" width="4.00" height="4" fill="#5fc6ee" fill-opacity="0.24"/><rect x="4.00" y="8" width="4.00" height="4" fill="#7fb9e8" fill-opacity="0.25"/><rect x="8.00" y="8" width="4.00" height="4" fill="#4aaee6" fill-opacity="0.66"/><rect x="12.00" y="8" width="4.00" height="4" fill="#78c4ee" fill-opacity="0.34"/><rect x="16.00" y="8" width="4.00" height="4" fill="#5fc6ee" fill-opacity="0.28"/><rect x="20.00" y="8" width="4.00" height="4" fill="#5cb8ea" fill-opacity="0.37"/><rect x="24.00" y="8" width="4.00" height="4" fill="#4aaee6" fill-opacity="0.24"/><rect x="28.00" y="8" width="4.00" height="4" fill="#5cb8ea" fill-opacity="0.60"/><rect x="32.00" y="8" width="4.00" height="4" fill="#3da5e0" fill-opacity="0.44"/><rect x="40.00" y="8" width="4.00" height="4" fill="#7fb9e8" fill-opacity="0.31"/><rect x="44.00" y="8" width="4.00" height="4" fill="#4aaee6" fill-opacity="0.24"/><rect x="48.00" y="8" width="4.00" height="4" fill="#4aaee6" fill-opacity="0.57"/><rect x="52.00" y="8" width="4.00" height="4" fill="#3da5e0" fill-opacity="0.27"/><rect x="56.00" y="8" width="4.00" height="4" fill="#5fc6ee" fill-opacity="0.23"/><rect x="64.00" y="8" width="4.00" height="4" fill="#78c4ee" fill-opacity="0.57"/><rect x="68.00" y="8" width="4.00" height="4" fill="#4aaee6" fill-opacity="0.64"/><rect x="72.00" y="8" width="4.00" height="4" fill="#3da5e0" fill-opacity="0.25"/><rect x="76.00" y="8" width="4.00" height="4" fill="#7fb9e8" fill-opacity="0.69"/><rect x="84.00" y="8" width="4.00" height="4" fill="#78c4ee" fill-opacity="0.64"/><rect x="88.00" y="8" width="4.00" height="4" fill="#3da5e0" fill-opacity="0.33"/><rect x="92.00" y="8" width="4.00" height="4" fill="#5fc6ee" fill-opacity="0.38"/><rect x="96.00" y="8" width="4.00" height="4" fill="#78c4ee" fill-opacity="0.68"/><rect x="100.00" y="8" width="4.00" height="4" fill="#5cb8ea" fill-opacity="0.60"/><rect x="12.00" y="12" width="4.00" height="4" fill="#78c4ee" fill-opacity="0.13"/><rect x="16.00" y="12" width="4.00" height="4" fill="#4aaee6" fill-opacity="0.07"/><rect x="28.00" y="12" width="4.00" height="4" fill="#7fb9e8" fill-opacity="0.09"/><rect x="36.00" y="12" width="4.00" height="4" fill="#5fc6ee" fill-opacity="0.14"/><rect x="48.00" y="12" width="4.00" height="4" fill="#78c4ee" fill-opacity="0.06"/><rect x="64.00" y="12" width="4.00" height="4" fill="#5cb8ea" fill-opacity="0.04"/><rect x="76.00" y="12" width="4.00" height="4" fill="#78c4ee" fill-opacity="0.14"/><rect x="84.00" y="12" width="4.00" height="4" fill="#4aaee6" fill-opacity="0.06"/><rect x="88.00" y="12" width="4.00" height="4" fill="#7fb9e8" fill-opacity="0.13"/><rect x="92.00" y="12" width="4.00" height="4" fill="#7fb9e8" fill-opacity="0.15"/><rect x="100.00" y="12" width="4.00" height="4" fill="#4aaee6" fill-opacity="0.04"/></svg>
<svg class="abs" style="left:352px;top:502px" width="107" height="16" shape-rendering="crispEdges"><rect x="3.96" y="0" width="3.96" height="4" fill="#777" fill-opacity="0.05"/><rect x="11.89" y="0" width="3.96" height="4" fill="#9a9490" fill-opacity="0.05"/><rect x="15.85" y="0" width="3.96" height="4" fill="#9a9490" fill-opacity="0.12"/><rect x="23.78" y="0" width="3.96" height="4" fill="#888" fill-opacity="0.16"/><rect x="31.70" y="0" width="3.96" height="4" fill="#7f8590" fill-opacity="0.10"/><rect x="39.63" y="0" width="3.96" height="4" fill="#777" fill-opacity="0.16"/><rect x="51.52" y="0" width="3.96" height="4" fill="#8a8890" fill-opacity="0.07"/><rect x="59.44" y="0" width="3.96" height="4" fill="#aaa" fill-opacity="0.18"/><rect x="63.41" y="0" width="3.96" height="4" fill="#9a9490" fill-opacity="0.09"/><rect x="67.37" y="0" width="3.96" height="4" fill="#777" fill-opacity="0.07"/><rect x="71.33" y="0" width="3.96" height="4" fill="#9a9490" fill-opacity="0.15"/><rect x="75.30" y="0" width="3.96" height="4" fill="#777" fill-opacity="0.08"/><rect x="79.26" y="0" width="3.96" height="4" fill="#777" fill-opacity="0.06"/><rect x="83.22" y="0" width="3.96" height="4" fill="#9a9490" fill-opacity="0.14"/><rect x="91.15" y="0" width="3.96" height="4" fill="#999" fill-opacity="0.09"/><rect x="99.07" y="0" width="3.96" height="4" fill="#999" fill-opacity="0.19"/><rect x="0.00" y="4" width="3.96" height="4" fill="#7f8590" fill-opacity="0.39"/><rect x="3.96" y="4" width="3.96" height="4" fill="#9a9490" fill-opacity="0.39"/><rect x="7.93" y="4" width="3.96" height="4" fill="#aaa" fill-opacity="0.65"/><rect x="11.89" y="4" width="3.96" height="4" fill="#aaa" fill-opacity="0.60"/><rect x="15.85" y="4" width="3.96" height="4" fill="#888" fill-opacity="0.54"/><rect x="19.81" y="4" width="3.96" height="4" fill="#888" fill-opacity="0.64"/><rect x="23.78" y="4" width="3.96" height="4" fill="#aaa" fill-opacity="0.45"/><rect x="27.74" y="4" width="3.96" height="4" fill="#8a8890" fill-opacity="0.25"/><rect x="31.70" y="4" width="3.96" height="4" fill="#777" fill-opacity="0.32"/><rect x="35.67" y="4" width="3.96" height="4" fill="#777" fill-opacity="0.45"/><rect x="39.63" y="4" width="3.96" height="4" fill="#777" fill-opacity="0.57"/><rect x="43.59" y="4" width="3.96" height="4" fill="#888" fill-opacity="0.45"/><rect x="51.52" y="4" width="3.96" height="4" fill="#888" fill-opacity="0.23"/><rect x="55.48" y="4" width="3.96" height="4" fill="#8a8890" fill-opacity="0.39"/><rect x="59.44" y="4" width="3.96" height="4" fill="#777" fill-opacity="0.38"/><rect x="63.41" y="4" width="3.96" height="4" fill="#7f8590" fill-opacity="0.32"/><rect x="67.37" y="4" width="3.96" height="4" fill="#aaa" fill-opacity="0.52"/><rect x="71.33" y="4" width="3.96" height="4" fill="#8a8890" fill-opacity="0.23"/><rect x="75.30" y="4" width="3.96" height="4" fill="#888" fill-opacity="0.32"/><rect x="79.26" y="4" width="3.96" height="4" fill="#777" fill-opacity="0.36"/><rect x="83.22" y="4" width="3.96" height="4" fill="#8a8890" fill-opacity="0.34"/><rect x="87.19" y="4" width="3.96" height="4" fill="#aaa" fill-opacity="0.27"/><rect x="91.15" y="4" width="3.96" height="4" fill="#888" fill-opacity="0.37"/><rect x="95.11" y="4" width="3.96" height="4" fill="#777" fill-opacity="0.61"/><rect x="99.07" y="4" width="3.96" height="4" fill="#8a8890" fill-opacity="0.71"/><rect x="103.04" y="4" width="3.96" height="4" fill="#7f8590" fill-opacity="0.46"/><rect x="0.00" y="8" width="3.96" height="4" fill="#777" fill-opacity="0.47"/><rect x="3.96" y="8" width="3.96" height="4" fill="#777" fill-opacity="0.56"/><rect x="7.93" y="8" width="3.96" height="4" fill="#8a8890" fill-opacity="0.32"/><rect x="11.89" y="8" width="3.96" height="4" fill="#999" fill-opacity="0.27"/><rect x="15.85" y="8" width="3.96" height="4" fill="#999" fill-opacity="0.62"/><rect x="19.81" y="8" width="3.96" height="4" fill="#999" fill-opacity="0.65"/><rect x="23.78" y="8" width="3.96" height="4" fill="#7f8590" fill-opacity="0.54"/><rect x="27.74" y="8" width="3.96" height="4" fill="#7f8590" fill-opacity="0.51"/><rect x="31.70" y="8" width="3.96" height="4" fill="#777" fill-opacity="0.31"/><rect x="35.67" y="8" width="3.96" height="4" fill="#aaa" fill-opacity="0.71"/><rect x="39.63" y="8" width="3.96" height="4" fill="#9a9490" fill-opacity="0.59"/><rect x="43.59" y="8" width="3.96" height="4" fill="#777" fill-opacity="0.23"/><rect x="47.56" y="8" width="3.96" height="4" fill="#8a8890" fill-opacity="0.21"/><rect x="51.52" y="8" width="3.96" height="4" fill="#9a9490" fill-opacity="0.45"/><rect x="55.48" y="8" width="3.96" height="4" fill="#7f8590" fill-opacity="0.59"/><rect x="63.41" y="8" width="3.96" height="4" fill="#aaa" fill-opacity="0.31"/><rect x="67.37" y="8" width="3.96" height="4" fill="#aaa" fill-opacity="0.36"/><rect x="71.33" y="8" width="3.96" height="4" fill="#aaa" fill-opacity="0.32"/><rect x="75.30" y="8" width="3.96" height="4" fill="#999" fill-opacity="0.41"/><rect x="79.26" y="8" width="3.96" height="4" fill="#9a9490" fill-opacity="0.57"/><rect x="83.22" y="8" width="3.96" height="4" fill="#aaa" fill-opacity="0.28"/><rect x="87.19" y="8" width="3.96" height="4" fill="#aaa" fill-opacity="0.28"/><rect x="91.15" y="8" width="3.96" height="4" fill="#9a9490" fill-opacity="0.44"/><rect x="95.11" y="8" width="3.96" height="4" fill="#999" fill-opacity="0.40"/><rect x="99.07" y="8" width="3.96" height="4" fill="#8a8890" fill-opacity="0.26"/><rect x="103.04" y="8" width="3.96" height="4" fill="#9a9490" fill-opacity="0.27"/><rect x="0.00" y="12" width="3.96" height="4" fill="#aaa" fill-opacity="0.07"/><rect x="3.96" y="12" width="3.96" height="4" fill="#888" fill-opacity="0.06"/><rect x="7.93" y="12" width="3.96" height="4" fill="#aaa" fill-opacity="0.13"/><rect x="11.89" y="12" width="3.96" height="4" fill="#7f8590" fill-opacity="0.14"/><rect x="15.85" y="12" width="3.96" height="4" fill="#7f8590" fill-opacity="0.05"/><rect x="19.81" y="12" width="3.96" height="4" fill="#8a8890" fill-opacity="0.14"/><rect x="23.78" y="12" width="3.96" height="4" fill="#aaa" fill-opacity="0.08"/><rect x="27.74" y="12" width="3.96" height="4" fill="#999" fill-opacity="0.03"/><rect x="31.70" y="12" width="3.96" height="4" fill="#888" fill-opacity="0.12"/><rect x="39.63" y="12" width="3.96" height="4" fill="#aaa" fill-opacity="0.09"/><rect x="43.59" y="12" width="3.96" height="4" fill="#7f8590" fill-opacity="0.11"/><rect x="51.52" y="12" width="3.96" height="4" fill="#7f8590" fill-opacity="0.06"/><rect x="63.41" y="12" width="3.96" height="4" fill="#9a9490" fill-opacity="0.09"/><rect x="67.37" y="12" width="3.96" height="4" fill="#999" fill-opacity="0.04"/><rect x="75.30" y="12" width="3.96" height="4" fill="#999" fill-opacity="0.11"/><rect x="83.22" y="12" width="3.96" height="4" fill="#999" fill-opacity="0.14"/><rect x="91.15" y="12" width="3.96" height="4" fill="#9a9490" fill-opacity="0.12"/><rect x="99.07" y="12" width="3.96" height="4" fill="#777" fill-opacity="0.07"/><rect x="103.04" y="12" width="3.96" height="4" fill="#aaa" fill-opacity="0.07"/></svg>
<svg class="abs" style="left:352px;top:517px" width="11" height="16" shape-rendering="crispEdges"><rect x="7.33" y="0" width="3.67" height="4" fill="#aaa" fill-opacity="0.19"/><rect x="7.33" y="4" width="3.67" height="4" fill="#9a9490" fill-opacity="0.70"/><rect x="0.00" y="8" width="3.67" height="4" fill="#7f8590" fill-opacity="0.70"/><rect x="3.67" y="8" width="3.67" height="4" fill="#999" fill-opacity="0.58"/><rect x="7.33" y="8" width="3.67" height="4" fill="#999" fill-opacity="0.46"/><rect x="0.00" y="12" width="3.67" height="4" fill="#888" fill-opacity="0.06"/><rect x="7.33" y="12" width="3.67" height="4" fill="#8a8890" fill-opacity="0.09"/></svg>
<svg class="abs" style="left:465px;top:511px" width="65" height="16" shape-rendering="crispEdges"><rect x="16.25" y="0" width="4.06" height="4" fill="#999" fill-opacity="0.13"/><rect x="24.38" y="0" width="4.06" height="4" fill="#8a8890" fill-opacity="0.07"/><rect x="40.62" y="0" width="4.06" height="4" fill="#7f8590" fill-opacity="0.06"/><rect x="4.06" y="4" width="4.06" height="4" fill="#999" fill-opacity="0.60"/><rect x="8.12" y="4" width="4.06" height="4" fill="#777" fill-opacity="0.28"/><rect x="12.19" y="4" width="4.06" height="4" fill="#aaa" fill-opacity="0.64"/><rect x="16.25" y="4" width="4.06" height="4" fill="#777" fill-opacity="0.30"/><rect x="20.31" y="4" width="4.06" height="4" fill="#9a9490" fill-opacity="0.41"/><rect x="24.38" y="4" width="4.06" height="4" fill="#777" fill-opacity="0.24"/><rect x="28.44" y="4" width="4.06" height="4" fill="#888" fill-opacity="0.24"/><rect x="32.50" y="4" width="4.06" height="4" fill="#999" fill-opacity="0.32"/><rect x="40.62" y="4" width="4.06" height="4" fill="#777" fill-opacity="0.32"/><rect x="44.69" y="4" width="4.06" height="4" fill="#888" fill-opacity="0.69"/><rect x="48.75" y="4" width="4.06" height="4" fill="#9a9490" fill-opacity="0.37"/><rect x="52.81" y="4" width="4.06" height="4" fill="#7f8590" fill-opacity="0.35"/><rect x="56.88" y="4" width="4.06" height="4" fill="#777" fill-opacity="0.33"/><rect x="0.00" y="8" width="4.06" height="4" fill="#777" fill-opacity="0.34"/><rect x="4.06" y="8" width="4.06" height="4" fill="#999" fill-opacity="0.56"/><rect x="8.12" y="8" width="4.06" height="4" fill="#999" fill-opacity="0.65"/><rect x="12.19" y="8" width="4.06" height="4" fill="#888" fill-opacity="0.46"/><rect x="16.25" y="8" width="4.06" height="4" fill="#aaa" fill-opacity="0.71"/><rect x="20.31" y="8" width="4.06" height="4" fill="#7f8590" fill-opacity="0.28"/><rect x="24.38" y="8" width="4.06" height="4" fill="#777" fill-opacity="0.35"/><rect x="28.44" y="8" width="4.06" height="4" fill="#aaa" fill-opacity="0.61"/><rect x="32.50" y="8" width="4.06" height="4" fill="#888" fill-opacity="0.23"/><rect x="36.56" y="8" width="4.06" height="4" fill="#aaa" fill-opacity="0.57"/><rect x="40.62" y="8" width="4.06" height="4" fill="#9a9490" fill-opacity="0.62"/><rect x="44.69" y="8" width="4.06" height="4" fill="#9a9490" fill-opacity="0.54"/><rect x="48.75" y="8" width="4.06" height="4" fill="#9a9490" fill-opacity="0.21"/><rect x="52.81" y="8" width="4.06" height="4" fill="#8a8890" fill-opacity="0.64"/><rect x="56.88" y="8" width="4.06" height="4" fill="#8a8890" fill-opacity="0.33"/><rect x="60.94" y="8" width="4.06" height="4" fill="#777" fill-opacity="0.37"/><rect x="0.00" y="12" width="4.06" height="4" fill="#888" fill-opacity="0.12"/><rect x="8.12" y="12" width="4.06" height="4" fill="#8a8890" fill-opacity="0.12"/><rect x="20.31" y="12" width="4.06" height="4" fill="#7f8590" fill-opacity="0.07"/><rect x="28.44" y="12" width="4.06" height="4" fill="#8a8890" fill-opacity="0.04"/><rect x="52.81" y="12" width="4.06" height="4" fill="#7f8590" fill-opacity="0.07"/><rect x="56.88" y="12" width="4.06" height="4" fill="#999" fill-opacity="0.12"/><rect x="60.94" y="12" width="4.06" height="4" fill="#9a9490" fill-opacity="0.04"/></svg>
<svg class="abs" style="left:575px;top:511px" width="55" height="16" shape-rendering="crispEdges"><rect x="0.00" y="0" width="3.93" height="4" fill="#7f8590" fill-opacity="0.07"/><rect x="11.79" y="0" width="3.93" height="4" fill="#9a9490" fill-opacity="0.06"/><rect x="31.43" y="0" width="3.93" height="4" fill="#7f8590" fill-opacity="0.05"/><rect x="35.36" y="0" width="3.93" height="4" fill="#8a8890" fill-opacity="0.10"/><rect x="39.29" y="0" width="3.93" height="4" fill="#9a9490" fill-opacity="0.17"/><rect x="43.21" y="0" width="3.93" height="4" fill="#8a8890" fill-opacity="0.09"/><rect x="51.07" y="0" width="3.93" height="4" fill="#9a9490" fill-opacity="0.15"/><rect x="0.00" y="4" width="3.93" height="4" fill="#999" fill-opacity="0.68"/><rect x="3.93" y="4" width="3.93" height="4" fill="#8a8890" fill-opacity="0.25"/><rect x="7.86" y="4" width="3.93" height="4" fill="#888" fill-opacity="0.68"/><rect x="11.79" y="4" width="3.93" height="4" fill="#9a9490" fill-opacity="0.71"/><rect x="15.71" y="4" width="3.93" height="4" fill="#9a9490" fill-opacity="0.44"/><rect x="19.64" y="4" width="3.93" height="4" fill="#aaa" fill-opacity="0.54"/><rect x="23.57" y="4" width="3.93" height="4" fill="#8a8890" fill-opacity="0.60"/><rect x="27.50" y="4" width="3.93" height="4" fill="#7f8590" fill-opacity="0.28"/><rect x="31.43" y="4" width="3.93" height="4" fill="#777" fill-opacity="0.70"/><rect x="35.36" y="4" width="3.93" height="4" fill="#7f8590" fill-opacity="0.67"/><rect x="39.29" y="4" width="3.93" height="4" fill="#777" fill-opacity="0.26"/><rect x="43.21" y="4" width="3.93" height="4" fill="#9a9490" fill-opacity="0.63"/><rect x="47.14" y="4" width="3.93" height="4" fill="#888" fill-opacity="0.29"/><rect x="51.07" y="4" width="3.93" height="4" fill="#7f8590" fill-opacity="0.62"/><rect x="0.00" y="8" width="3.93" height="4" fill="#888" fill-opacity="0.26"/><rect x="3.93" y="8" width="3.93" height="4" fill="#777" fill-opacity="0.49"/><rect x="7.86" y="8" width="3.93" height="4" fill="#7f8590" fill-opacity="0.59"/><rect x="15.71" y="8" width="3.93" height="4" fill="#9a9490" fill-opacity="0.70"/><rect x="19.64" y="8" width="3.93" height="4" fill="#8a8890" fill-opacity="0.59"/><rect x="23.57" y="8" width="3.93" height="4" fill="#888" fill-opacity="0.58"/><rect x="27.50" y="8" width="3.93" height="4" fill="#8a8890" fill-opacity="0.68"/><rect x="31.43" y="8" width="3.93" height="4" fill="#999" fill-opacity="0.62"/><rect x="35.36" y="8" width="3.93" height="4" fill="#9a9490" fill-opacity="0.21"/><rect x="39.29" y="8" width="3.93" height="4" fill="#888" fill-opacity="0.72"/><rect x="47.14" y="8" width="3.93" height="4" fill="#7f8590" fill-opacity="0.36"/><rect x="51.07" y="8" width="3.93" height="4" fill="#888" fill-opacity="0.38"/><rect x="3.93" y="12" width="3.93" height="4" fill="#888" fill-opacity="0.03"/><rect x="11.79" y="12" width="3.93" height="4" fill="#9a9490" fill-opacity="0.12"/><rect x="15.71" y="12" width="3.93" height="4" fill="#999" fill-opacity="0.03"/><rect x="19.64" y="12" width="3.93" height="4" fill="#999" fill-opacity="0.07"/><rect x="27.50" y="12" width="3.93" height="4" fill="#8a8890" fill-opacity="0.10"/><rect x="31.43" y="12" width="3.93" height="4" fill="#888" fill-opacity="0.04"/><rect x="35.36" y="12" width="3.93" height="4" fill="#aaa" fill-opacity="0.11"/><rect x="51.07" y="12" width="3.93" height="4" fill="#aaa" fill-opacity="0.14"/></svg>
<svg class="abs" style="left:230px;top:550px" width="106" height="16" shape-rendering="crispEdges"><rect x="0.00" y="0" width="4.08" height="4" fill="#5cb8ea" fill-opacity="0.18"/><rect x="12.23" y="0" width="4.08" height="4" fill="#3da5e0" fill-opacity="0.14"/><rect x="16.31" y="0" width="4.08" height="4" fill="#5cb8ea" fill-opacity="0.09"/><rect x="24.46" y="0" width="4.08" height="4" fill="#78c4ee" fill-opacity="0.17"/><rect x="32.62" y="0" width="4.08" height="4" fill="#5cb8ea" fill-opacity="0.09"/><rect x="93.77" y="0" width="4.08" height="4" fill="#4aaee6" fill-opacity="0.05"/><rect x="97.85" y="0" width="4.08" height="4" fill="#4aaee6" fill-opacity="0.04"/><rect x="101.92" y="0" width="4.08" height="4" fill="#4aaee6" fill-opacity="0.05"/><rect x="0.00" y="4" width="4.08" height="4" fill="#3da5e0" fill-opacity="0.23"/><rect x="4.08" y="4" width="4.08" height="4" fill="#3da5e0" fill-opacity="0.36"/><rect x="12.23" y="4" width="4.08" height="4" fill="#5fc6ee" fill-opacity="0.53"/><rect x="16.31" y="4" width="4.08" height="4" fill="#7fb9e8" fill-opacity="0.67"/><rect x="20.38" y="4" width="4.08" height="4" fill="#78c4ee" fill-opacity="0.58"/><rect x="24.46" y="4" width="4.08" height="4" fill="#5fc6ee" fill-opacity="0.26"/><rect x="32.62" y="4" width="4.08" height="4" fill="#3da5e0" fill-opacity="0.24"/><rect x="36.69" y="4" width="4.08" height="4" fill="#7fb9e8" fill-opacity="0.66"/><rect x="40.77" y="4" width="4.08" height="4" fill="#5fc6ee" fill-opacity="0.31"/><rect x="44.85" y="4" width="4.08" height="4" fill="#7fb9e8" fill-opacity="0.70"/><rect x="48.92" y="4" width="4.08" height="4" fill="#5fc6ee" fill-opacity="0.54"/><rect x="53.00" y="4" width="4.08" height="4" fill="#3da5e0" fill-opacity="0.51"/><rect x="57.08" y="4" width="4.08" height="4" fill="#4aaee6" fill-opacity="0.27"/><rect x="61.15" y="4" width="4.08" height="4" fill="#5fc6ee" fill-opacity="0.35"/><rect x="65.23" y="4" width="4.08" height="4" fill="#5cb8ea" fill-opacity="0.39"/><rect x="69.31" y="4" width="4.08" height="4" fill="#4aaee6" fill-opacity="0.51"/><rect x="73.38" y="4" width="4.08" height="4" fill="#7fb9e8" fill-opacity="0.66"/><rect x="77.46" y="4" width="4.08" height="4" fill="#7fb9e8" fill-opacity="0.40"/><rect x="81.54" y="4" width="4.08" height="4" fill="#78c4ee" fill-opacity="0.42"/><rect x="85.62" y="4" width="4.08" height="4" fill="#7fb9e8" fill-opacity="0.37"/><rect x="93.77" y="4" width="4.08" height="4" fill="#4aaee6" fill-opacity="0.59"/><rect x="97.85" y="4" width="4.08" height="4" fill="#3da5e0" fill-opacity="0.27"/><rect x="0.00" y="8" width="4.08" height="4" fill="#5cb8ea" fill-opacity="0.61"/><rect x="4.08" y="8" width="4.08" height="4" fill="#4aaee6" fill-opacity="0.54"/><rect x="8.15" y="8" width="4.08" height="4" fill="#4aaee6" fill-opacity="0.39"/><rect x="12.23" y="8" width="4.08" height="4" fill="#5fc6ee" fill-opacity="0.21"/><rect x="16.31" y="8" width="4.08" height="4" fill="#7fb9e8" fill-opacity="0.57"/><rect x="24.46" y="8" width="4.08" height="4" fill="#5fc6ee" fill-opacity="0.68"/><rect x="28.54" y="8" width="4.08" height="4" fill="#3da5e0" fill-opacity="0.28"/><rect x="32.62" y="8" width="4.08" height="4" fill="#5fc6ee" fill-opacity="0.42"/><rect x="36.69" y="8" width="4.08" height="4" fill="#5cb8ea" fill-opacity="0.51"/><rect x="40.77" y="8" width="4.08" height="4" fill="#3da5e0" fill-opacity="0.47"/><rect x="44.85" y="8" width="4.08" height="4" fill="#78c4ee" fill-opacity="0.60"/><rect x="53.00" y="8" width="4.08" height="4" fill="#5fc6ee" fill-opacity="0.61"/><rect x="57.08" y="8" width="4.08" height="4" fill="#5cb8ea" fill-opacity="0.47"/><rect x="61.15" y="8" width="4.08" height="4" fill="#5cb8ea" fill-opacity="0.29"/><rect x="69.31" y="8" width="4.08" height="4" fill="#3da5e0" fill-opacity="0.26"/><rect x="73.38" y="8" width="4.08" height="4" fill="#78c4ee" fill-opacity="0.57"/><rect x="77.46" y="8" width="4.08" height="4" fill="#5fc6ee" fill-opacity="0.42"/><rect x="81.54" y="8" width="4.08" height="4" fill="#3da5e0" fill-opacity="0.69"/><rect x="85.62" y="8" width="4.08" height="4" fill="#5fc6ee" fill-opacity="0.65"/><rect x="89.69" y="8" width="4.08" height="4" fill="#3da5e0" fill-opacity="0.27"/><rect x="93.77" y="8" width="4.08" height="4" fill="#5fc6ee" fill-opacity="0.31"/><rect x="97.85" y="8" width="4.08" height="4" fill="#5cb8ea" fill-opacity="0.60"/><rect x="0.00" y="12" width="4.08" height="4" fill="#78c4ee" fill-opacity="0.13"/><rect x="8.15" y="12" width="4.08" height="4" fill="#5cb8ea" fill-opacity="0.05"/><rect x="12.23" y="12" width="4.08" height="4" fill="#5fc6ee" fill-opacity="0.05"/><rect x="16.31" y="12" width="4.08" height="4" fill="#5cb8ea" fill-opacity="0.09"/><rect x="20.38" y="12" width="4.08" height="4" fill="#5fc6ee" fill-opacity="0.13"/><rect x="36.69" y="12" width="4.08" height="4" fill="#5cb8ea" fill-opacity="0.10"/><rect x="44.85" y="12" width="4.08" height="4" fill="#3da5e0" fill-opacity="0.07"/><rect x="53.00" y="12" width="4.08" height="4" fill="#3da5e0" fill-opacity="0.07"/><rect x="57.08" y="12" width="4.08" height="4" fill="#3da5e0" fill-opacity="0.11"/><rect x="77.46" y="12" width="4.08" height="4" fill="#3da5e0" fill-opacity="0.12"/><rect x="81.54" y="12" width="4.08" height="4" fill="#7fb9e8" fill-opacity="0.11"/><rect x="85.62" y="12" width="4.08" height="4" fill="#78c4ee" fill-opacity="0.08"/><rect x="89.69" y="12" width="4.08" height="4" fill="#7fb9e8" fill-opacity="0.11"/><rect x="101.92" y="12" width="4.08" height="4" fill="#3da5e0" fill-opacity="0.07"/></svg>
<svg class="abs" style="left:352px;top:550px" width="79" height="16" shape-rendering="crispEdges"><rect x="11.85" y="0" width="3.95" height="4" fill="#9a9490" fill-opacity="0.19"/><rect x="23.70" y="0" width="3.95" height="4" fill="#aaa" fill-opacity="0.06"/><rect x="39.50" y="0" width="3.95" height="4" fill="#9a9490" fill-opacity="0.08"/><rect x="47.40" y="0" width="3.95" height="4" fill="#999" fill-opacity="0.13"/><rect x="59.25" y="0" width="3.95" height="4" fill="#9a9490" fill-opacity="0.10"/><rect x="71.10" y="0" width="3.95" height="4" fill="#777" fill-opacity="0.17"/><rect x="75.05" y="0" width="3.95" height="4" fill="#9a9490" fill-opacity="0.19"/><rect x="0.00" y="4" width="3.95" height="4" fill="#999" fill-opacity="0.66"/><rect x="3.95" y="4" width="3.95" height="4" fill="#7f8590" fill-opacity="0.28"/><rect x="7.90" y="4" width="3.95" height="4" fill="#888" fill-opacity="0.24"/><rect x="11.85" y="4" width="3.95" height="4" fill="#888" fill-opacity="0.62"/><rect x="15.80" y="4" width="3.95" height="4" fill="#8a8890" fill-opacity="0.31"/><rect x="19.75" y="4" width="3.95" height="4" fill="#7f8590" fill-opacity="0.58"/><rect x="27.65" y="4" width="3.95" height="4" fill="#9a9490" fill-opacity="0.27"/><rect x="35.55" y="4" width="3.95" height="4" fill="#8a8890" fill-opacity="0.68"/><rect x="39.50" y="4" width="3.95" height="4" fill="#8a8890" fill-opacity="0.22"/><rect x="43.45" y="4" width="3.95" height="4" fill="#777" fill-opacity="0.40"/><rect x="47.40" y="4" width="3.95" height="4" fill="#888" fill-opacity="0.57"/><rect x="51.35" y="4" width="3.95" height="4" fill="#777" fill-opacity="0.71"/><rect x="55.30" y="4" width="3.95" height="4" fill="#777" fill-opacity="0.28"/><rect x="59.25" y="4" width="3.95" height="4" fill="#7f8590" fill-opacity="0.57"/><rect x="63.20" y="4" width="3.95" height="4" fill="#777" fill-opacity="0.44"/><rect x="67.15" y="4" width="3.95" height="4" fill="#7f8590" fill-opacity="0.52"/><rect x="75.05" y="4" width="3.95" height="4" fill="#aaa" fill-opacity="0.26"/><rect x="0.00" y="8" width="3.95" height="4" fill="#999" fill-opacity="0.40"/><rect x="3.95" y="8" width="3.95" height="4" fill="#777" fill-opacity="0.45"/><rect x="11.85" y="8" width="3.95" height="4" fill="#888" fill-opacity="0.29"/><rect x="15.80" y="8" width="3.95" height="4" fill="#7f8590" fill-opacity="0.61"/><rect x="19.75" y="8" width="3.95" height="4" fill="#9a9490" fill-opacity="0.23"/><rect x="23.70" y="8" width="3.95" height="4" fill="#aaa" fill-opacity="0.67"/><rect x="27.65" y="8" width="3.95" height="4" fill="#9a9490" fill-opacity="0.61"/><rect x="31.60" y="8" width="3.95" height="4" fill="#777" fill-opacity="0.43"/><rect x="35.55" y="8" width="3.95" height="4" fill="#8a8890" fill-opacity="0.38"/><rect x="39.50" y="8" width="3.95" height="4" fill="#777" fill-opacity="0.28"/><rect x="47.40" y="8" width="3.95" height="4" fill="#888" fill-opacity="0.27"/><rect x="51.35" y="8" width="3.95" height="4" fill="#7f8590" fill-opacity="0.28"/><rect x="55.30" y="8" width="3.95" height="4" fill="#aaa" fill-opacity="0.62"/><rect x="59.25" y="8" width="3.95" height="4" fill="#aaa" fill-opacity="0.69"/><rect x="63.20" y="8" width="3.95" height="4" fill="#7f8590" fill-opacity="0.42"/><rect x="67.15" y="8" width="3.95" height="4" fill="#7f8590" fill-opacity="0.40"/><rect x="71.10" y="8" width="3.95" height="4" fill="#9a9490" fill-opacity="0.70"/><rect x="3.95" y="12" width="3.95" height="4" fill="#999" fill-opacity="0.08"/><rect x="11.85" y="12" width="3.95" height="4" fill="#9a9490" fill-opacity="0.11"/><rect x="27.65" y="12" width="3.95" height="4" fill="#999" fill-opacity="0.12"/><rect x="35.55" y="12" width="3.95" height="4" fill="#9a9490" fill-opacity="0.10"/><rect x="43.45" y="12" width="3.95" height="4" fill="#777" fill-opacity="0.14"/><rect x="55.30" y="12" width="3.95" height="4" fill="#777" fill-opacity="0.08"/><rect x="71.10" y="12" width="3.95" height="4" fill="#777" fill-opacity="0.14"/></svg>
<svg class="abs" style="left:461px;top:550px" width="69" height="16" shape-rendering="crispEdges"><rect x="0.00" y="0" width="4.06" height="4" fill="#777" fill-opacity="0.10"/><rect x="8.12" y="0" width="4.06" height="4" fill="#aaa" fill-opacity="0.18"/><rect x="12.18" y="0" width="4.06" height="4" fill="#7f8590" fill-opacity="0.16"/><rect x="16.24" y="0" width="4.06" height="4" fill="#aaa" fill-opacity="0.05"/><rect x="24.35" y="0" width="4.06" height="4" fill="#999" fill-opacity="0.14"/><rect x="32.47" y="0" width="4.06" height="4" fill="#9a9490" fill-opacity="0.12"/><rect x="40.59" y="0" width="4.06" height="4" fill="#aaa" fill-opacity="0.13"/><rect x="48.71" y="0" width="4.06" height="4" fill="#999" fill-opacity="0.14"/><rect x="52.76" y="0" width="4.06" height="4" fill="#8a8890" fill-opacity="0.19"/><rect x="60.88" y="0" width="4.06" height="4" fill="#aaa" fill-opacity="0.17"/><rect x="0.00" y="4" width="4.06" height="4" fill="#9a9490" fill-opacity="0.71"/><rect x="4.06" y="4" width="4.06" height="4" fill="#999" fill-opacity="0.69"/><rect x="8.12" y="4" width="4.06" height="4" fill="#888" fill-opacity="0.40"/><rect x="12.18" y="4" width="4.06" height="4" fill="#8a8890" fill-opacity="0.46"/><rect x="16.24" y="4" width="4.06" height="4" fill="#aaa" fill-opacity="0.25"/><rect x="20.29" y="4" width="4.06" height="4" fill="#888" fill-opacity="0.66"/><rect x="24.35" y="4" width="4.06" height="4" fill="#7f8590" fill-opacity="0.44"/><rect x="28.41" y="4" width="4.06" height="4" fill="#aaa" fill-opacity="0.35"/><rect x="36.53" y="4" width="4.06" height="4" fill="#aaa" fill-opacity="0.27"/><rect x="40.59" y="4" width="4.06" height="4" fill="#aaa" fill-opacity="0.54"/><rect x="44.65" y="4" width="4.06" height="4" fill="#888" fill-opacity="0.37"/><rect x="52.76" y="4" width="4.06" height="4" fill="#888" fill-opacity="0.65"/><rect x="56.82" y="4" width="4.06" height="4" fill="#888" fill-opacity="0.67"/><rect x="60.88" y="4" width="4.06" height="4" fill="#999" fill-opacity="0.72"/><rect x="0.00" y="8" width="4.06" height="4" fill="#9a9490" fill-opacity="0.53"/><rect x="4.06" y="8" width="4.06" height="4" fill="#888" fill-opacity="0.70"/><rect x="8.12" y="8" width="4.06" height="4" fill="#aaa" fill-opacity="0.68"/><rect x="12.18" y="8" width="4.06" height="4" fill="#8a8890" fill-opacity="0.23"/><rect x="16.24" y="8" width="4.06" height="4" fill="#aaa" fill-opacity="0.44"/><rect x="20.29" y="8" width="4.06" height="4" fill="#999" fill-opacity="0.30"/><rect x="24.35" y="8" width="4.06" height="4" fill="#9a9490" fill-opacity="0.56"/><rect x="28.41" y="8" width="4.06" height="4" fill="#888" fill-opacity="0.66"/><rect x="32.47" y="8" width="4.06" height="4" fill="#999" fill-opacity="0.44"/><rect x="36.53" y="8" width="4.06" height="4" fill="#8a8890" fill-opacity="0.25"/><rect x="40.59" y="8" width="4.06" height="4" fill="#888" fill-opacity="0.51"/><rect x="44.65" y="8" width="4.06" height="4" fill="#8a8890" fill-opacity="0.25"/><rect x="56.82" y="8" width="4.06" height="4" fill="#999" fill-opacity="0.50"/><rect x="60.88" y="8" width="4.06" height="4" fill="#999" fill-opacity="0.48"/><rect x="64.94" y="8" width="4.06" height="4" fill="#8a8890" fill-opacity="0.37"/><rect x="0.00" y="12" width="4.06" height="4" fill="#7f8590" fill-opacity="0.06"/><rect x="4.06" y="12" width="4.06" height="4" fill="#7f8590" fill-opacity="0.12"/><rect x="20.29" y="12" width="4.06" height="4" fill="#7f8590" fill-opacity="0.14"/><rect x="28.41" y="12" width="4.06" height="4" fill="#999" fill-opacity="0.10"/><rect x="32.47" y="12" width="4.06" height="4" fill="#7f8590" fill-opacity="0.12"/><rect x="40.59" y="12" width="4.06" height="4" fill="#9a9490" fill-opacity="0.03"/><rect x="44.65" y="12" width="4.06" height="4" fill="#7f8590" fill-opacity="0.09"/><rect x="48.71" y="12" width="4.06" height="4" fill="#7f8590" fill-opacity="0.13"/><rect x="52.76" y="12" width="4.06" height="4" fill="#777" fill-opacity="0.06"/></svg>
<svg class="abs" style="left:575px;top:542px" width="55" height="16" shape-rendering="crispEdges"><rect x="0.00" y="0" width="3.93" height="4" fill="#8a8890" fill-opacity="0.05"/><rect x="3.93" y="0" width="3.93" height="4" fill="#9a9490" fill-opacity="0.08"/><rect x="15.71" y="0" width="3.93" height="4" fill="#9a9490" fill-opacity="0.15"/><rect x="23.57" y="0" width="3.93" height="4" fill="#888" fill-opacity="0.07"/><rect x="31.43" y="0" width="3.93" height="4" fill="#777" fill-opacity="0.07"/><rect x="35.36" y="0" width="3.93" height="4" fill="#9a9490" fill-opacity="0.18"/><rect x="47.14" y="0" width="3.93" height="4" fill="#777" fill-opacity="0.20"/><rect x="51.07" y="0" width="3.93" height="4" fill="#8a8890" fill-opacity="0.17"/><rect x="0.00" y="4" width="3.93" height="4" fill="#999" fill-opacity="0.59"/><rect x="3.93" y="4" width="3.93" height="4" fill="#aaa" fill-opacity="0.42"/><rect x="7.86" y="4" width="3.93" height="4" fill="#777" fill-opacity="0.70"/><rect x="15.71" y="4" width="3.93" height="4" fill="#888" fill-opacity="0.54"/><rect x="19.64" y="4" width="3.93" height="4" fill="#888" fill-opacity="0.39"/><rect x="23.57" y="4" width="3.93" height="4" fill="#999" fill-opacity="0.67"/><rect x="27.50" y="4" width="3.93" height="4" fill="#888" fill-opacity="0.28"/><rect x="31.43" y="4" width="3.93" height="4" fill="#aaa" fill-opacity="0.51"/><rect x="35.36" y="4" width="3.93" height="4" fill="#9a9490" fill-opacity="0.36"/><rect x="39.29" y="4" width="3.93" height="4" fill="#8a8890" fill-opacity="0.49"/><rect x="43.21" y="4" width="3.93" height="4" fill="#7f8590" fill-opacity="0.59"/><rect x="47.14" y="4" width="3.93" height="4" fill="#888" fill-opacity="0.42"/><rect x="0.00" y="8" width="3.93" height="4" fill="#999" fill-opacity="0.67"/><rect x="3.93" y="8" width="3.93" height="4" fill="#8a8890" fill-opacity="0.25"/><rect x="7.86" y="8" width="3.93" height="4" fill="#8a8890" fill-opacity="0.42"/><rect x="11.79" y="8" width="3.93" height="4" fill="#7f8590" fill-opacity="0.32"/><rect x="19.64" y="8" width="3.93" height="4" fill="#888" fill-opacity="0.71"/><rect x="27.50" y="8" width="3.93" height="4" fill="#777" fill-opacity="0.29"/><rect x="31.43" y="8" width="3.93" height="4" fill="#aaa" fill-opacity="0.60"/><rect x="35.36" y="8" width="3.93" height="4" fill="#8a8890" fill-opacity="0.54"/><rect x="39.29" y="8" width="3.93" height="4" fill="#aaa" fill-opacity="0.24"/><rect x="47.14" y="8" width="3.93" height="4" fill="#999" fill-opacity="0.28"/><rect x="51.07" y="8" width="3.93" height="4" fill="#777" fill-opacity="0.68"/><rect x="3.93" y="12" width="3.93" height="4" fill="#777" fill-opacity="0.05"/><rect x="31.43" y="12" width="3.93" height="4" fill="#777" fill-opacity="0.03"/><rect x="35.36" y="12" width="3.93" height="4" fill="#7f8590" fill-opacity="0.12"/><rect x="39.29" y="12" width="3.93" height="4" fill="#888" fill-opacity="0.08"/><rect x="47.14" y="12" width="3.93" height="4" fill="#777" fill-opacity="0.11"/><rect x="51.07" y="12" width="3.93" height="4" fill="#7f8590" fill-opacity="0.09"/></svg>
<svg class="abs" style="left:575px;top:558px" width="25" height="16" shape-rendering="crispEdges"><rect x="0.00" y="0" width="4.17" height="4" fill="#888" fill-opacity="0.10"/><rect x="4.17" y="0" width="4.17" height="4" fill="#999" fill-opacity="0.13"/><rect x="12.50" y="0" width="4.17" height="4" fill="#7f8590" fill-opacity="0.08"/><rect x="16.67" y="0" width="4.17" height="4" fill="#8a8890" fill-opacity="0.05"/><rect x="0.00" y="4" width="4.17" height="4" fill="#777" fill-opacity="0.28"/><rect x="4.17" y="4" width="4.17" height="4" fill="#999" fill-opacity="0.30"/><rect x="12.50" y="4" width="4.17" height="4" fill="#8a8890" fill-opacity="0.46"/><rect x="16.67" y="4" width="4.17" height="4" fill="#8a8890" fill-opacity="0.25"/><rect x="20.83" y="4" width="4.17" height="4" fill="#777" fill-opacity="0.43"/><rect x="4.17" y="8" width="4.17" height="4" fill="#888" fill-opacity="0.45"/><rect x="8.33" y="8" width="4.17" height="4" fill="#7f8590" fill-opacity="0.43"/><rect x="12.50" y="8" width="4.17" height="4" fill="#9a9490" fill-opacity="0.56"/><rect x="20.83" y="8" width="4.17" height="4" fill="#aaa" fill-opacity="0.61"/><rect x="4.17" y="12" width="4.17" height="4" fill="#777" fill-opacity="0.07"/><rect x="8.33" y="12" width="4.17" height="4" fill="#999" fill-opacity="0.14"/><rect x="12.50" y="12" width="4.17" height="4" fill="#999" fill-opacity="0.11"/><rect x="16.67" y="12" width="4.17" height="4" fill="#888" fill-opacity="0.13"/></svg>
<svg class="abs" style="left:792px;top:18px" width="54" height="16" shape-rendering="crispEdges"><rect x="0.00" y="4" width="3.60" height="4" fill="#999" fill-opacity="0.20"/><rect x="3.60" y="4" width="3.60" height="4" fill="#aab" fill-opacity="0.35"/><rect x="7.20" y="4" width="3.60" height="4" fill="#99a4b8" fill-opacity="0.25"/><rect x="10.80" y="4" width="3.60" height="4" fill="#b0b0b0" fill-opacity="0.24"/><rect x="14.40" y="4" width="3.60" height="4" fill="#aab" fill-opacity="0.28"/><rect x="18.00" y="4" width="3.60" height="4" fill="#99a4b8" fill-opacity="0.32"/><rect x="25.20" y="4" width="3.60" height="4" fill="#a8b0c0" fill-opacity="0.52"/><rect x="28.80" y="4" width="3.60" height="4" fill="#a8b0c0" fill-opacity="0.41"/><rect x="32.40" y="4" width="3.60" height="4" fill="#aab" fill-opacity="0.31"/><rect x="36.00" y="4" width="3.60" height="4" fill="#99a4b8" fill-opacity="0.32"/><rect x="39.60" y="4" width="3.60" height="4" fill="#aab" fill-opacity="0.40"/><rect x="43.20" y="4" width="3.60" height="4" fill="#aab" fill-opacity="0.43"/><rect x="46.80" y="4" width="3.60" height="4" fill="#a8b0c0" fill-opacity="0.35"/><rect x="50.40" y="4" width="3.60" height="4" fill="#99a4b8" fill-opacity="0.39"/><rect x="0.00" y="8" width="3.60" height="4" fill="#b0b0b0" fill-opacity="0.22"/><rect x="10.80" y="8" width="3.60" height="4" fill="#a8b0c0" fill-opacity="0.28"/><rect x="21.60" y="8" width="3.60" height="4" fill="#999" fill-opacity="0.26"/><rect x="36.00" y="8" width="3.60" height="4" fill="#99a4b8" fill-opacity="0.18"/><rect x="46.80" y="8" width="3.60" height="4" fill="#aab" fill-opacity="0.16"/></svg>
</div>
</body>
</html>
